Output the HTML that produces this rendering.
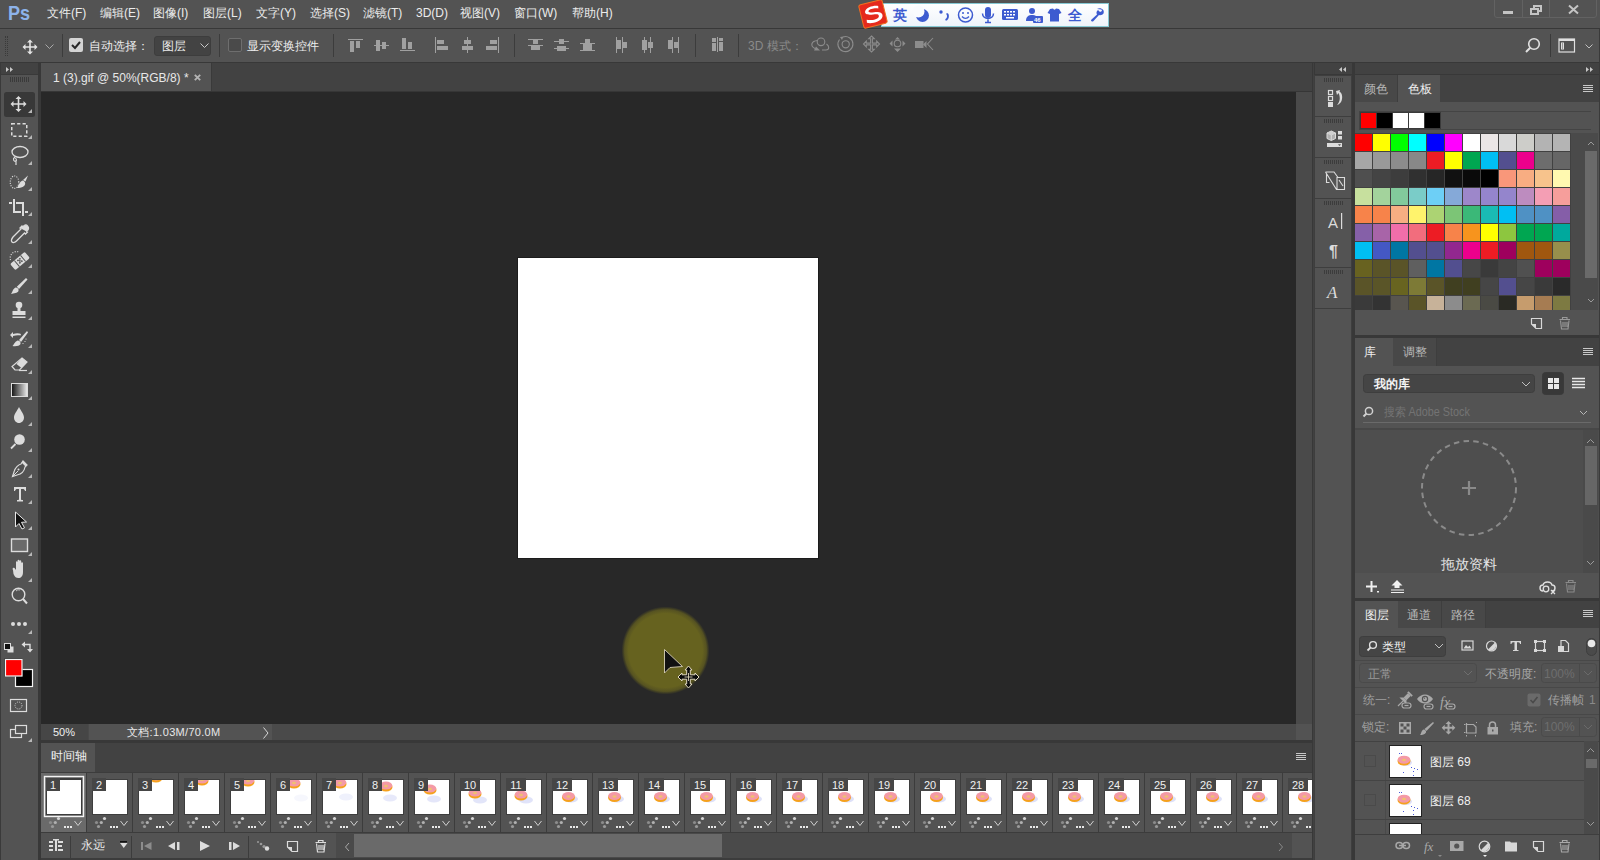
<!DOCTYPE html>
<html><head><meta charset="utf-8">
<style>
*{margin:0;padding:0;box-sizing:border-box}
html,body{width:1600px;height:860px;overflow:hidden;background:#535353;font-family:"Liberation Sans",sans-serif;font-size:12px;color:#ececec}
.a{position:absolute}
.t{position:absolute;white-space:nowrap;line-height:1}
svg{position:absolute;overflow:visible}
</style></head><body>
<!-- menu bar -->
<div class="a" style="left:0;top:0;width:1600px;height:28px;background:#535353"></div>
<div class="a" style="left:0;top:28px;width:1600px;height:1px;background:#383838"></div>
<!-- options bar -->
<div class="a" style="left:0;top:29px;width:1600px;height:33px;background:#535353"></div>
<div class="a" style="left:0;top:62px;width:1600px;height:1px;background:#383838"></div>
<!-- left toolbar -->
<div class="a" style="left:0;top:63px;width:38px;height:797px;background:#535353"></div>
<div class="a" style="left:0;top:63px;width:38px;height:11px;background:#424242"></div><div class="a" style="left:0;top:74px;width:38px;height:1px;background:#3a3a3a"></div><div class="a" style="left:0;top:63px;width:1px;height:797px;background:#3a3a3a"></div>
<div class="a" style="left:38px;top:63px;width:3px;height:797px;background:#383838"></div>
<!-- doc tab bar -->
<div class="a" style="left:41px;top:63px;width:1271px;height:29px;background:#424242"></div>
<div class="a" style="left:41px;top:63px;width:170px;height:28px;background:#535353"></div><div class="a" style="left:211px;top:63px;width:1px;height:28px;background:#3a3a3a"></div><div class="a" style="left:41px;top:91px;width:1271px;height:1px;background:#363636"></div>
<!-- canvas -->
<div class="a" style="left:41px;top:92px;width:1255px;height:632px;background:#282828"></div>
<div class="a" style="left:1296px;top:92px;width:16px;height:632px;background:#4a4a4a"></div>
<div class="a" style="left:517px;top:257px;width:302px;height:302px;background:#1c1c1c"></div>
<div class="a" style="left:518px;top:258px;width:300px;height:300px;background:#ffffff"></div>
<!-- status bar -->
<div class="a" style="left:41px;top:724px;width:1271px;height:16px;background:#4a4a4a"></div>
<div class="a" style="left:41px;top:724px;width:47px;height:16px;background:#464646"></div>
<div class="a" style="left:89px;top:724px;width:183px;height:16px;background:#535353"></div>
<div class="a" style="left:1296px;top:724px;width:16px;height:16px;background:#535353"></div>
<div class="a" style="left:41px;top:740px;width:1271px;height:3px;background:#383838"></div>
<!-- timeline -->
<div class="a" style="left:41px;top:743px;width:1271px;height:29px;background:#424242"></div>
<div class="a" style="left:41px;top:743px;width:54px;height:29px;background:#535353"></div>
<div class="a" style="left:41px;top:772px;width:1271px;height:61px;background:#3c3c3c"></div>
<div class="a" style="left:41px;top:833px;width:1271px;height:27px;background:#4a4a4a"></div>
<div class="a" style="left:41px;top:833px;width:295px;height:27px;background:#535353"></div>
<div class="a" style="left:1292px;top:833px;width:20px;height:27px;background:#535353"></div>
<div class="a" style="left:354px;top:834px;width:368px;height:23px;background:#6a6a6a"></div>
<div class="a" style="left:41px;top:858px;width:1271px;height:2px;background:#3c3c3c"></div>
<!-- gutter -->
<div class="a" style="left:1312px;top:63px;width:3px;height:797px;background:#383838"></div><div class="a" style="left:1313px;top:63px;width:1px;height:797px;background:#414141"></div>
<!-- icon strip -->
<div class="a" style="left:1315px;top:63px;width:37px;height:797px;background:#535353"></div>
<div class="a" style="left:1315px;top:63px;width:37px;height:11px;background:#424242"></div>
<div class="a" style="left:1352px;top:63px;width:3px;height:797px;background:#383838"></div>
<!-- right panels -->
<div class="a" style="left:1315px;top:74px;width:285px;height:1px;background:#383838"></div>
<div class="a" style="left:1355px;top:63px;width:245px;height:11px;background:#424242"></div>
<div class="a" style="left:1599px;top:29px;width:1px;height:831px;background:#3a3a3a;z-index:5"></div>
<!-- MENU -->
<div class="t" style="left:8px;top:2px;font-size:21px;font-weight:bold;color:#8db3ea;transform:scaleX(0.86);transform-origin:0 0">Ps</div>
<div class="t" style="left:47px;top:7px">文件(F)</div>
<div class="t" style="left:100px;top:7px">编辑(E)</div>
<div class="t" style="left:153px;top:7px">图像(I)</div>
<div class="t" style="left:203px;top:7px">图层(L)</div>
<div class="t" style="left:256px;top:7px">文字(Y)</div>
<div class="t" style="left:310px;top:7px">选择(S)</div>
<div class="t" style="left:363px;top:7px">滤镜(T)</div>
<div class="t" style="left:416px;top:7px">3D(D)</div>
<div class="t" style="left:460px;top:7px">视图(V)</div>
<div class="t" style="left:514px;top:7px">窗口(W)</div>
<div class="t" style="left:572px;top:7px">帮助(H)</div>
<!-- OPTIONS -->
<div class="a" style="left:5px;top:36px;width:1px;height:20px;border-left:1px dotted #3a3a3a"></div>
<div class="a" style="left:7px;top:36px;width:1px;height:20px;border-left:1px dotted #3a3a3a"></div>
<svg style="left:22px;top:39px" width="16" height="16" viewBox="0 0 16 16"><path d="M8 0.5 L11 3.5 H8.8 V7.2 H12.5 V5 L15.5 8 L12.5 11 V8.8 H8.8 V12.5 H11 L8 15.5 L5 12.5 H7.2 V8.8 H3.5 V11 L0.5 8 L3.5 5 V7.2 H7.2 V3.5 H5 Z" fill="#e4e4e4"/></svg>
<svg style="left:45px;top:44px" width="9" height="6" viewBox="0 0 9 6"><path d="M0.5 0.5 L4.5 4.5 L8.5 0.5" stroke="#a8a8a8" fill="none" stroke-width="1"/></svg>
<div class="a" style="left:62px;top:34px;width:1px;height:23px;background:#3c3c3c"></div>
<div class="a" style="left:69px;top:38px;width:14px;height:14px;background:#d4d4d4;border-radius:2px"></div>
<svg style="left:69px;top:38px" width="14" height="14" viewBox="0 0 14 14"><path d="M3 7 L6 10 L11 4" stroke="#282828" stroke-width="2" fill="none"/></svg>
<div class="t" style="left:89px;top:40px">自动选择：</div>
<div class="a" style="left:154px;top:36px;width:57px;height:20px;background:#434343;border:1px solid #3d3d3d;border-radius:3px"></div>
<div class="t" style="left:162px;top:40px">图层</div>
<svg style="left:200px;top:43px" width="9" height="6" viewBox="0 0 9 6"><path d="M0.5 0.5 L4.5 4.5 L8.5 0.5" stroke="#c8c8c8" fill="none" stroke-width="1"/></svg>
<div class="a" style="left:219px;top:34px;width:1px;height:23px;background:#3c3c3c"></div>
<div class="a" style="left:228px;top:38px;width:14px;height:14px;background:#4a4a4a;border:1px solid #6e6e6e;border-radius:2px"></div>
<div class="t" style="left:247px;top:40px">显示变换控件</div>
<div class="a" style="left:333px;top:34px;width:1px;height:23px;background:#3c3c3c"></div>
<svg style="left:0;top:0" width="1600" height="62">
<g fill="#a0a0a0">
<rect x="348" y="39" width="15" height="1"/><rect x="350" y="41" width="4" height="11"/><rect x="356" y="41" width="4" height="7"/>
<rect x="374" y="45" width="15" height="1"/><rect x="376" y="40" width="4" height="11"/><rect x="382" y="42" width="4" height="7"/>
<rect x="400" y="50" width="15" height="1"/><rect x="402" y="38" width="4" height="11"/><rect x="408" y="42" width="4" height="7"/>
<rect x="435" y="37" width="1" height="16"/><rect x="437" y="40" width="7" height="4"/><rect x="437" y="46" width="11" height="4"/>
<rect x="467" y="37" width="1" height="16"/><rect x="464" y="40" width="7" height="4"/><rect x="462" y="46" width="11" height="4"/>
<rect x="498" y="37" width="1" height="16"/><rect x="490" y="40" width="7" height="4"/><rect x="486" y="46" width="11" height="4"/>
<rect x="528" y="39" width="15" height="1"/><rect x="533" y="40" width="5" height="4"/><rect x="528" y="45" width="15" height="1"/><rect x="531" y="46" width="9" height="4"/>
<rect x="554" y="41" width="15" height="1"/><rect x="559" y="39" width="5" height="5"/><rect x="554" y="48" width="15" height="1"/><rect x="557" y="46" width="9" height="5"/>
<rect x="585" y="39" width="5" height="4"/><rect x="580" y="43" width="15" height="1"/><rect x="583" y="44" width="9" height="6"/><rect x="580" y="50" width="15" height="1"/>
<rect x="616" y="37" width="1" height="16"/><rect x="617" y="40" width="4" height="9"/><rect x="622" y="37" width="1" height="16"/><rect x="623" y="42" width="4" height="6"/>
<rect x="644" y="37" width="1" height="16"/><rect x="642" y="40" width="5" height="10"/><rect x="650" y="37" width="1" height="16"/><rect x="648" y="42" width="5" height="6"/>
<rect x="668" y="40" width="4" height="9"/><rect x="672" y="37" width="1" height="16"/><rect x="674" y="42" width="4" height="6"/><rect x="678" y="37" width="1" height="16"/>
<rect x="712" y="38" width="4" height="4"/><rect x="712" y="43" width="4" height="8"/><rect x="717" y="37" width="1" height="15"/><rect x="719" y="38" width="4" height="3"/><rect x="719" y="42" width="4" height="9"/>
</g>
<rect x="514" y="34" width="1" height="23" fill="#3c3c3c"/>
<rect x="695" y="34" width="1" height="23" fill="#3c3c3c"/>
<rect x="738" y="34" width="1" height="23" fill="#3c3c3c"/>
<g stroke="#8c8c8c" fill="none" stroke-width="1.1">
<circle cx="821" cy="41.8" r="3.8"/><path d="M817.5 40.5 C811 41 810 46 815 48.5 M822 50 H826 C829.5 50 829.5 46 826.5 44"/>
<path d="M839.5 39.5 A7.5 7.5 0 1 0 843 37" /><circle cx="845.7" cy="44.3" r="3.6"/>
<path d="M871.5 36 L874.3 38.8 H872.4 V43.1 H876.7 V41.2 L879.5 44 L876.7 46.8 V44.9 H872.4 V49.2 H874.3 L871.5 52 L868.7 49.2 H870.6 V44.9 H866.3 V46.8 L863.5 44 L866.3 41.2 V43.1 H870.6 V38.8 H868.7 Z"/>
<circle cx="897.5" cy="43.5" r="3.3"/>
<path d="M933 38 L927.5 44 L933 50"/>
</g>
<g fill="#8c8c8c">
<path d="M814 50.5 L820 50.5 L816 46.5 Z"/>
<path d="M840 37 L843.5 36.5 L842 40 Z"/>
<path d="M897.5 37 L900 39.5 H895 Z M897.5 52 L901 48.5 H894 Z M889.5 43.5 L892.5 40.5 V46.5 Z M905.5 43.5 L902.5 40.5 V46.5 Z"/>
<rect x="915" y="41" width="8.5" height="7"/><path d="M923 44.5 L926.5 41 V48 Z"/>
</g>
</svg>
<div class="t" style="left:748px;top:40px;color:#8a8a8a">3D 模式：</div>
<svg style="left:1524px;top:37px" width="18" height="17" viewBox="0 0 18 17"><circle cx="10" cy="7" r="5.3" stroke="#e0e0e0" stroke-width="1.6" fill="none"/><path d="M6.2 10.8 L2 15" stroke="#e0e0e0" stroke-width="2"/></svg>
<div class="a" style="left:1550px;top:34px;width:1px;height:23px;background:#3a3a3a"></div>
<svg style="left:1558px;top:38px" width="18" height="16" viewBox="0 0 18 16"><rect x="1" y="1" width="15.5" height="13" fill="none" stroke="#e0e0e0" stroke-width="1.2"/><rect x="1" y="1" width="15.5" height="2" fill="#e0e0e0"/><rect x="3" y="4.5" width="3" height="7" fill="#e0e0e0"/><g fill="#535353"><rect x="4" y="5.5" width="1" height="1"/><rect x="4" y="7.5" width="1" height="1"/><rect x="4" y="9.5" width="1" height="1"/></g></svg>
<svg style="left:1585px;top:44px" width="9" height="6" viewBox="0 0 9 6"><path d="M0.5 0.5 L4 4 L7.5 0.5" stroke="#c0c0c0" fill="none"/></svg>
<!-- window ctrls -->
<div class="a" style="left:1494px;top:-3px;width:103px;height:21px;border:1px solid #626262;border-radius:3px"></div>
<div class="a" style="left:1522px;top:0;width:1px;height:18px;background:#626262"></div>
<div class="a" style="left:1549px;top:0;width:1px;height:18px;background:#626262"></div>
<div class="a" style="left:1503px;top:11px;width:10px;height:3px;background:#c4c4c4"></div>
<div class="a" style="left:1533px;top:5px;width:9px;height:7px;border:2px solid #c4c4c4"></div>
<div class="a" style="left:1530px;top:8px;width:9px;height:7px;border:2px solid #c4c4c4;background:#535353"></div>
<svg style="left:1568px;top:5px" width="11" height="9" viewBox="0 0 11 9"><path d="M1 0.5 L10 8.5 M10 0.5 L1 8.5" stroke="#c4c4c4" stroke-width="2"/></svg>
<!-- TOOLBAR -->
<svg style="left:0;top:0" width="40" height="860">
<path d="M6 67 L9 69.5 L6 72 Z M10 67 L13 69.5 L10 72 Z" fill="#c8c8c8"/>
<g fill="#3a3a3a"><rect x="10" y="77" width="1" height="5"/><rect x="12" y="77" width="1" height="5"/><rect x="14" y="77" width="1" height="5"/><rect x="16" y="77" width="1" height="5"/><rect x="18" y="77" width="1" height="5"/><rect x="20" y="77" width="1" height="5"/><rect x="22" y="77" width="1" height="5"/><rect x="24" y="77" width="1" height="5"/><rect x="26" y="77" width="1" height="5"/><rect x="28" y="77" width="1" height="5"/></g>
<rect x="4" y="92" width="31" height="25" rx="2.5" fill="#383838"/>
<path d="M18.5 96 L21.5 99 H19.3 V103.2 H23.5 V101 L26.5 104 L23.5 107 V104.8 H19.3 V109 H21.5 L18.5 112 L15.5 109 H17.7 V104.8 H13.5 V107 L10.5 104 L13.5 101 V103.2 H17.7 V99 H15.5 Z" fill="#dcdcdc"/>
<path d="M32 109 V113 H28 Z" fill="#b8b8b8"/>
<rect x="11.75" y="123.75" width="15" height="12.5" fill="none" stroke="#dcdcdc" stroke-width="1.5" stroke-dasharray="3.2 2.2"/>
<path d="M32 135 V139 H28 Z" fill="#b8b8b8"/>
<ellipse cx="20" cy="152" rx="8" ry="5.5" fill="none" stroke="#dcdcdc" stroke-width="1.3"/>
<path d="M15 157 C12 159 14 162 16 161 C17 160 16 158 15 158 M16 161 V165" fill="none" stroke="#dcdcdc" stroke-width="1.2"/>
<path d="M32 161 V165 H28 Z" fill="#b8b8b8"/>
<ellipse cx="14.5" cy="182.2" rx="4.3" ry="6.2" fill="none" stroke="#dcdcdc" stroke-width="1.1" stroke-dasharray="1.1 1.3"/>
<path d="M28 175.5 L25.5 181.5 L23 180 Z" fill="#dcdcdc"/><path d="M22.5 180.5 C25 181 26 183.5 24.5 185.5 C23 187.5 19.5 188 17 188 C18.5 186.5 19 182 22.5 180.5 Z" fill="#dcdcdc"/>
<path d="M32 187 V191 H28 Z" fill="#b8b8b8"/>
<g fill="#dcdcdc"><rect x="13" y="199" width="2" height="14"/><rect x="13" y="211" width="8" height="2"/><rect x="9" y="202" width="3" height="2"/><rect x="16" y="202" width="8" height="2"/><rect x="22" y="202" width="2" height="14"/><rect x="25" y="211" width="3" height="2"/></g>
<path d="M32 212 V216 H28 Z" fill="#b8b8b8"/>
<path d="M27.5 226 C26 224 24 225 23 227 L22 226 L20 228 L21 229 L13 237 C11.5 239 11 241 12 242 C13 243 15 242.5 16.5 241 L24.5 233 L25.5 234 L27.5 232 L26.5 231 C28.5 230 29.5 228 27.5 226 Z" fill="none" stroke="#dcdcdc" stroke-width="1.3"/>
<path d="M27.5 226 C26 224 24 225 23 227 L22 226 L20 228 L27.5 232 L26.5 231 C28.5 230 29.5 228 27.5 226 Z" fill="#dcdcdc"/>
<path d="M32 240 V244 H28 Z" fill="#b8b8b8"/>
<path d="M10.5 260 A6.5 6.5 0 0 1 19 252" fill="none" stroke="#dcdcdc" stroke-width="1.2" stroke-dasharray="1 1.5"/>
<g transform="rotate(-40 20 261)"><rect x="10.5" y="257" width="19" height="8" rx="1.5" fill="#dcdcdc"/><rect x="15.5" y="257" width="1" height="8" fill="#535353"/><rect x="23.5" y="257" width="1" height="8" fill="#535353"/>
<g fill="#535353"><rect x="18" y="258.5" width="1.6" height="1.6"/><rect x="20.5" y="258.5" width="1.6" height="1.6"/><rect x="18" y="261.5" width="1.6" height="1.6"/><rect x="20.5" y="261.5" width="1.6" height="1.6"/><rect x="19.2" y="260" width="1.6" height="1.6"/></g></g>
<path d="M32 264 V268 H28 Z" fill="#b8b8b8"/>
<path d="M26 278 L27.5 279.5 L19 289 L16.8 286.8 Z" fill="#dcdcdc"/><path d="M15.5 287.5 C17.5 287.5 19 289 18.5 291 C17.5 293 14 293.5 11 294 C12.5 292.5 12.5 289 15.5 287.5 Z" fill="#dcdcdc"/>
<path d="M32 290 V294 H28 Z" fill="#b8b8b8"/>
<circle cx="19" cy="305" r="3.3" fill="#dcdcdc"/><rect x="17.5" y="307" width="3" height="5" fill="#dcdcdc"/><rect x="12.5" y="311" width="13" height="4" fill="#dcdcdc"/><rect x="12.5" y="316.5" width="13" height="1.5" fill="#dcdcdc"/>
<path d="M32 316 V320 H28 Z" fill="#b8b8b8"/>
<path d="M10 335 L13 332 V334 C16 333 19 333 21 334 L20.5 335.5 C18.5 335 16 335 13 336 V338 Z" fill="#dcdcdc"/>
<path d="M27 331 L28 332.5 L21 342 L19 340 Z" fill="#dcdcdc"/><path d="M17.5 340.5 C19.5 340.5 21 342 20.5 344 C19.5 346 16 346.5 12.5 346 C14 344.5 14.5 342 17.5 340.5 Z" fill="#dcdcdc"/>
<g fill="#dcdcdc"><circle cx="26" cy="339" r=".6"/><circle cx="25" cy="341.5" r=".6"/><circle cx="23" cy="343.5" r=".6"/></g>
<path d="M32 344 V348 H28 Z" fill="#b8b8b8"/>
<path d="M22 358 L27 362 L19.5 370 L15 370 L12 366.5 Z" fill="none" stroke="#dcdcdc" stroke-width="1.2"/><path d="M22 358 L27 362 L21.5 368 L16.5 364 Z" fill="#dcdcdc"/><path d="M19 370.5 H27" stroke="#dcdcdc" stroke-width="1.2"/>
<path d="M32 370 V374 H28 Z" fill="#b8b8b8"/>
<defs><linearGradient id="gr" x1="0" x2="1"><stop offset="0" stop-color="#111"/><stop offset="1" stop-color="#eee"/></linearGradient></defs>
<rect x="11.5" y="383.5" width="16" height="13" fill="url(#gr)" stroke="#dcdcdc" stroke-width="1"/>
<path d="M32 396 V400 H28 Z" fill="#b8b8b8"/>
<path d="M19 407 C21 411 24 414 24 417.5 C24 420.5 21.8 423 19 423 C16.2 423 14 420.5 14 417.5 C14 414 17 411 19 407 Z" fill="#dcdcdc"/>
<path d="M32 422 V426 H28 Z" fill="#b8b8b8"/>
<circle cx="19.5" cy="439.5" r="5.3" fill="#dcdcdc"/><path d="M15.5 444 L11 448.5" stroke="#dcdcdc" stroke-width="1.8"/>
<path d="M32 448 V452 H28 Z" fill="#b8b8b8"/>
<path d="M23 461 L27 465 L25 467 C24.5 470 22 474 17 475 L12.5 476.5 L14 472 C15 467 19 464.5 21 464 Z" fill="none" stroke="#dcdcdc" stroke-width="1.2"/><path d="M23 461 L27 465 L25.5 466.5 L21.5 462.5 Z" fill="#dcdcdc"/><circle cx="18.5" cy="469.5" r="1" fill="#dcdcdc"/><path d="M13 476 L18 471" stroke="#dcdcdc" stroke-width="1"/>
<path d="M32 474 V478 H28 Z" fill="#b8b8b8"/>
<path d="M14 487 H26 V491 H25 C24.5 489.5 24 489 22.5 489 H21 V499 C21 500 21.5 500 23 500 V501.5 H17 V500 C18.5 500 19 500 19 499 V489 H17.5 C16 489 15.5 489.5 15 491 H14 Z" fill="#dcdcdc"/>
<path d="M32 500 V504 H28 Z" fill="#b8b8b8"/>
<path d="M15.5 512 V527 L19 523.5 L22 529 L24.5 527.8 L21.5 522.3 L26.5 522 Z" fill="#111" stroke="#e6e6e6" stroke-width="1"/>
<path d="M32 526 V530 H28 Z" fill="#b8b8b8"/>
<rect x="11.5" y="539" width="16" height="12.5" fill="#6a6a6a" stroke="#dcdcdc" stroke-width="1.4"/>
<path d="M32 552 V556 H28 Z" fill="#b8b8b8"/>
<path d="M13 570 C12 568.5 13 567 14.5 568 L16 570 V562 C16 561 17.6 561 17.6 562 V568 V560.5 C17.6 559.5 19.4 559.5 19.4 560.5 V568 V561 C19.4 560 21.2 560 21.2 561 V568 V563 C21.2 562 23 562 23 563 V572 C23 576 21 578 18.5 578 C16 578 15 577 13.5 574 Z" fill="#dcdcdc"/>
<path d="M32 578 V582 H28 Z" fill="#b8b8b8"/>
<circle cx="18.5" cy="594.5" r="6.3" fill="none" stroke="#dcdcdc" stroke-width="1.4"/><path d="M23 599 L27 603.5" stroke="#dcdcdc" stroke-width="2"/>
<path d="M16 591 A3.5 3.5 0 0 1 20 590" stroke="#dcdcdc" stroke-width="0.8" fill="none"/>
<g fill="#dcdcdc"><circle cx="13" cy="624" r="2"/><circle cx="19" cy="624" r="2"/><circle cx="25" cy="624" r="2"/></g>
<path d="M32 630 V634 H28 Z" fill="#b8b8b8"/>
<rect x="7.5" y="646.5" width="6" height="6" fill="#dcdcdc"/><rect x="4.5" y="643.5" width="6" height="6" fill="#111" stroke="#dcdcdc" stroke-width="1"/>
<path d="M24 644.5 H30 V649.5" fill="none" stroke="#dcdcdc" stroke-width="1.4"/><path d="M21.5 644.5 L25 641.5 V647.5 Z M30 652.5 L27 649 H33 Z" fill="#dcdcdc"/>
<rect x="15.5" y="669.5" width="17" height="17" fill="#000" stroke="#f4f4f4" stroke-width="1.2"/>

<rect x="4.5" y="658.5" width="18" height="18" fill="#1e1e1e"/><rect x="5.5" y="659.5" width="16.5" height="16.5" fill="#ff0000" stroke="#f4f4f4" stroke-width="1.2"/>
<rect x="10.5" y="699.5" width="16" height="12" fill="none" stroke="#dcdcdc" stroke-width="1.2"/><circle cx="18.5" cy="705.5" r="3.5" fill="none" stroke="#dcdcdc" stroke-width="1" stroke-dasharray="0.9 1.2"/>
<rect x="10.5" y="729.5" width="11" height="8" fill="none" stroke="#dcdcdc" stroke-width="1.2"/><rect x="15.5" y="725.5" width="11" height="8" fill="#535353" stroke="#dcdcdc" stroke-width="1.2"/>
<path d="M32 738 V742 H28 Z" fill="#b8b8b8"/>
</svg>
<!-- DOC TAB -->
<div class="t" id="doctab" style="left:53px;top:72px;font-size:12px;color:#e8e8e8">1 (3).gif @ 50%(RGB/8) *</div>
<svg style="left:194px;top:74px" width="7" height="7" viewBox="0 0 7 7"><path d="M0.8 0.8 L6.2 6.2 M6.2 0.8 L0.8 6.2" stroke="#b4b4b4" stroke-width="1.8"/></svg>
<!-- STATUS TEXT -->
<div class="t" style="left:53px;top:727px;font-size:11px;color:#f0f0f0">50%</div>
<div class="t" style="left:127px;top:727px;font-size:11px;color:#e8e8e8;letter-spacing:0.3px">文档:1.03M/70.0M</div>
<svg style="left:263px;top:727px" width="6" height="12" viewBox="0 0 6 12"><path d="M0.5 0.5 L5 6 L0.5 11.5" fill="none" stroke="#d8d8d8" stroke-width="1"/></svg>
<!-- TIMELINE TAB -->
<div class="t" style="left:51px;top:750px;color:#f0f0f0">时间轴</div>
<svg style="left:1296px;top:752px" width="10" height="9" viewBox="0 0 10 9"><path d="M0 1.5 H10 M0 3.5 H10 M0 5.5 H10 M0 7.5 H10" stroke="#c8c8c8" stroke-width="1"/></svg>
<svg style="left:0;top:0" width="1312" height="860"><defs><clipPath id="tlc"><rect x="41" y="772" width="1271" height="61"/></clipPath><clipPath id="th1"><rect x="47" y="780" width="34" height="34"/></clipPath><clipPath id="th2"><rect x="93" y="780" width="34" height="34"/></clipPath><clipPath id="th3"><rect x="139" y="780" width="34" height="34"/></clipPath><clipPath id="th4"><rect x="185" y="780" width="34" height="34"/></clipPath><clipPath id="th5"><rect x="231" y="780" width="34" height="34"/></clipPath><clipPath id="th6"><rect x="277" y="780" width="34" height="34"/></clipPath><clipPath id="th7"><rect x="323" y="780" width="34" height="34"/></clipPath><clipPath id="th8"><rect x="369" y="780" width="34" height="34"/></clipPath><clipPath id="th9"><rect x="415" y="780" width="34" height="34"/></clipPath><clipPath id="th10"><rect x="461" y="780" width="34" height="34"/></clipPath><clipPath id="th11"><rect x="507" y="780" width="34" height="34"/></clipPath><clipPath id="th12"><rect x="553" y="780" width="34" height="34"/></clipPath><clipPath id="th13"><rect x="599" y="780" width="34" height="34"/></clipPath><clipPath id="th14"><rect x="645" y="780" width="34" height="34"/></clipPath><clipPath id="th15"><rect x="691" y="780" width="34" height="34"/></clipPath><clipPath id="th16"><rect x="737" y="780" width="34" height="34"/></clipPath><clipPath id="th17"><rect x="783" y="780" width="34" height="34"/></clipPath><clipPath id="th18"><rect x="829" y="780" width="34" height="34"/></clipPath><clipPath id="th19"><rect x="875" y="780" width="34" height="34"/></clipPath><clipPath id="th20"><rect x="921" y="780" width="34" height="34"/></clipPath><clipPath id="th21"><rect x="967" y="780" width="34" height="34"/></clipPath><clipPath id="th22"><rect x="1013" y="780" width="34" height="34"/></clipPath><clipPath id="th23"><rect x="1059" y="780" width="34" height="34"/></clipPath><clipPath id="th24"><rect x="1105" y="780" width="34" height="34"/></clipPath><clipPath id="th25"><rect x="1151" y="780" width="34" height="34"/></clipPath><clipPath id="th26"><rect x="1197" y="780" width="34" height="34"/></clipPath><clipPath id="th27"><rect x="1243" y="780" width="34" height="34"/></clipPath><clipPath id="th28"><rect x="1289" y="780" width="34" height="34"/></clipPath></defs><g clip-path="url(#tlc)"><rect x="41" y="773" width="45" height="59" fill="#6a6a6a"/><rect x="44.5" y="776.5" width="39" height="40" fill="none" stroke="#f4f4f4" stroke-width="1.4"/><rect x="46" y="778" width="36" height="37" fill="#3c3c3c"/><rect x="47" y="780" width="34" height="34" fill="#ffffff"/><rect x="46" y="778" width="14" height="13" fill="#464646"/><text x="53.0" y="789" font-size="11" fill="#f0f0f0" text-anchor="middle" font-family="Liberation Sans, sans-serif">1</text><circle cx="58.5" cy="818.5" r="1.6" fill="#d6d6d6"/><circle cx="50.5" cy="822.5" r="1.6" fill="#8c8c8c"/><circle cx="55.3" cy="822.5" r="1.6" fill="#b0b0b0"/><circle cx="52.5" cy="826.5" r="1.6" fill="#9a9a9a"/><rect x="64" y="826" width="2" height="2" fill="#e8e8e8"/><rect x="67" y="826" width="2" height="2" fill="#e8e8e8"/><rect x="70" y="826" width="2" height="2" fill="#e8e8e8"/><path d="M74.5 821 L78 825.5 L81.5 821" fill="none" stroke="#d0d0d0" stroke-width="1"/><rect x="87" y="773" width="45" height="59" fill="#535353"/><rect x="92" y="779" width="36" height="36" fill="#3e3e3e"/><rect x="93" y="780" width="34" height="34" fill="#ffffff"/><g clip-path="url(#th2)"><ellipse cx="101" cy="777" rx="6.5" ry="4.5" fill="#f5a11c"/><ellipse cx="101" cy="775.5" rx="6.3" ry="4" fill="#f49aa6"/><ellipse cx="101" cy="776" rx="2" ry="1.2" fill="#f0c070"/></g><rect x="92" y="778" width="14" height="13" fill="#464646"/><text x="99.0" y="789" font-size="11" fill="#f0f0f0" text-anchor="middle" font-family="Liberation Sans, sans-serif">2</text><circle cx="104.5" cy="818.5" r="1.6" fill="#d6d6d6"/><circle cx="96.5" cy="822.5" r="1.6" fill="#8c8c8c"/><circle cx="101.3" cy="822.5" r="1.6" fill="#b0b0b0"/><circle cx="98.5" cy="826.5" r="1.6" fill="#9a9a9a"/><rect x="110" y="826" width="2" height="2" fill="#e8e8e8"/><rect x="113" y="826" width="2" height="2" fill="#e8e8e8"/><rect x="116" y="826" width="2" height="2" fill="#e8e8e8"/><path d="M120.5 821 L124 825.5 L127.5 821" fill="none" stroke="#d0d0d0" stroke-width="1"/><rect x="133" y="773" width="45" height="59" fill="#535353"/><rect x="138" y="779" width="36" height="36" fill="#3e3e3e"/><rect x="139" y="780" width="34" height="34" fill="#ffffff"/><g clip-path="url(#th3)"><ellipse cx="156" cy="778" rx="6.5" ry="4.5" fill="#f5a11c"/><ellipse cx="156" cy="776.5" rx="6.3" ry="4" fill="#f49aa6"/><ellipse cx="156" cy="777" rx="2" ry="1.2" fill="#f0c070"/></g><rect x="138" y="778" width="14" height="13" fill="#464646"/><text x="145.0" y="789" font-size="11" fill="#f0f0f0" text-anchor="middle" font-family="Liberation Sans, sans-serif">3</text><circle cx="150.5" cy="818.5" r="1.6" fill="#d6d6d6"/><circle cx="142.5" cy="822.5" r="1.6" fill="#8c8c8c"/><circle cx="147.3" cy="822.5" r="1.6" fill="#b0b0b0"/><circle cx="144.5" cy="826.5" r="1.6" fill="#9a9a9a"/><rect x="156" y="826" width="2" height="2" fill="#e8e8e8"/><rect x="159" y="826" width="2" height="2" fill="#e8e8e8"/><rect x="162" y="826" width="2" height="2" fill="#e8e8e8"/><path d="M166.5 821 L170 825.5 L173.5 821" fill="none" stroke="#d0d0d0" stroke-width="1"/><rect x="179" y="773" width="45" height="59" fill="#535353"/><rect x="184" y="779" width="36" height="36" fill="#3e3e3e"/><rect x="185" y="780" width="34" height="34" fill="#ffffff"/><g clip-path="url(#th4)"><ellipse cx="202" cy="781" rx="6.5" ry="4.5" fill="#f5a11c"/><ellipse cx="202" cy="779.5" rx="6.3" ry="4" fill="#f49aa6"/><ellipse cx="202" cy="780" rx="2" ry="1.2" fill="#f0c070"/></g><rect x="184" y="778" width="14" height="13" fill="#464646"/><text x="191.0" y="789" font-size="11" fill="#f0f0f0" text-anchor="middle" font-family="Liberation Sans, sans-serif">4</text><circle cx="196.5" cy="818.5" r="1.6" fill="#d6d6d6"/><circle cx="188.5" cy="822.5" r="1.6" fill="#8c8c8c"/><circle cx="193.3" cy="822.5" r="1.6" fill="#b0b0b0"/><circle cx="190.5" cy="826.5" r="1.6" fill="#9a9a9a"/><rect x="202" y="826" width="2" height="2" fill="#e8e8e8"/><rect x="205" y="826" width="2" height="2" fill="#e8e8e8"/><rect x="208" y="826" width="2" height="2" fill="#e8e8e8"/><path d="M212.5 821 L216 825.5 L219.5 821" fill="none" stroke="#d0d0d0" stroke-width="1"/><rect x="225" y="773" width="45" height="59" fill="#535353"/><rect x="230" y="779" width="36" height="36" fill="#3e3e3e"/><rect x="231" y="780" width="34" height="34" fill="#ffffff"/><g clip-path="url(#th5)"><ellipse cx="248" cy="782" rx="6.5" ry="4.5" fill="#f5a11c"/><ellipse cx="248" cy="780.5" rx="6.3" ry="4" fill="#f49aa6"/><ellipse cx="248" cy="781" rx="2" ry="1.2" fill="#f0c070"/></g><rect x="230" y="778" width="14" height="13" fill="#464646"/><text x="237.0" y="789" font-size="11" fill="#f0f0f0" text-anchor="middle" font-family="Liberation Sans, sans-serif">5</text><circle cx="242.5" cy="818.5" r="1.6" fill="#d6d6d6"/><circle cx="234.5" cy="822.5" r="1.6" fill="#8c8c8c"/><circle cx="239.3" cy="822.5" r="1.6" fill="#b0b0b0"/><circle cx="236.5" cy="826.5" r="1.6" fill="#9a9a9a"/><rect x="248" y="826" width="2" height="2" fill="#e8e8e8"/><rect x="251" y="826" width="2" height="2" fill="#e8e8e8"/><rect x="254" y="826" width="2" height="2" fill="#e8e8e8"/><path d="M258.5 821 L262 825.5 L265.5 821" fill="none" stroke="#d0d0d0" stroke-width="1"/><rect x="271" y="773" width="45" height="59" fill="#535353"/><rect x="276" y="779" width="36" height="36" fill="#3e3e3e"/><rect x="277" y="780" width="34" height="34" fill="#ffffff"/><g clip-path="url(#th6)"><ellipse cx="301" cy="798" rx="7" ry="3.5" fill="#d4d8f6" opacity="0.20"/><ellipse cx="294" cy="784" rx="6.5" ry="4.5" fill="#f5a11c"/><ellipse cx="294" cy="782.5" rx="6.3" ry="4" fill="#f49aa6"/><ellipse cx="294" cy="783" rx="2" ry="1.2" fill="#f0c070"/></g><rect x="276" y="778" width="14" height="13" fill="#464646"/><text x="283.0" y="789" font-size="11" fill="#f0f0f0" text-anchor="middle" font-family="Liberation Sans, sans-serif">6</text><circle cx="288.5" cy="818.5" r="1.6" fill="#d6d6d6"/><circle cx="280.5" cy="822.5" r="1.6" fill="#8c8c8c"/><circle cx="285.3" cy="822.5" r="1.6" fill="#b0b0b0"/><circle cx="282.5" cy="826.5" r="1.6" fill="#9a9a9a"/><rect x="294" y="826" width="2" height="2" fill="#e8e8e8"/><rect x="297" y="826" width="2" height="2" fill="#e8e8e8"/><rect x="300" y="826" width="2" height="2" fill="#e8e8e8"/><path d="M304.5 821 L308 825.5 L311.5 821" fill="none" stroke="#d0d0d0" stroke-width="1"/><rect x="317" y="773" width="45" height="59" fill="#535353"/><rect x="322" y="779" width="36" height="36" fill="#3e3e3e"/><rect x="323" y="780" width="34" height="34" fill="#ffffff"/><g clip-path="url(#th7)"><ellipse cx="346" cy="797" rx="7" ry="3.5" fill="#d4d8f6" opacity="0.36"/><ellipse cx="340" cy="784" rx="6.5" ry="4.5" fill="#f5a11c"/><ellipse cx="340" cy="782.5" rx="6.3" ry="4" fill="#f49aa6"/><ellipse cx="340" cy="783" rx="2" ry="1.2" fill="#f0c070"/></g><rect x="322" y="778" width="14" height="13" fill="#464646"/><text x="329.0" y="789" font-size="11" fill="#f0f0f0" text-anchor="middle" font-family="Liberation Sans, sans-serif">7</text><circle cx="334.5" cy="818.5" r="1.6" fill="#d6d6d6"/><circle cx="326.5" cy="822.5" r="1.6" fill="#8c8c8c"/><circle cx="331.3" cy="822.5" r="1.6" fill="#b0b0b0"/><circle cx="328.5" cy="826.5" r="1.6" fill="#9a9a9a"/><rect x="340" y="826" width="2" height="2" fill="#e8e8e8"/><rect x="343" y="826" width="2" height="2" fill="#e8e8e8"/><rect x="346" y="826" width="2" height="2" fill="#e8e8e8"/><path d="M350.5 821 L354 825.5 L357.5 821" fill="none" stroke="#d0d0d0" stroke-width="1"/><rect x="363" y="773" width="45" height="59" fill="#535353"/><rect x="368" y="779" width="36" height="36" fill="#3e3e3e"/><rect x="369" y="780" width="34" height="34" fill="#ffffff"/><g clip-path="url(#th8)"><ellipse cx="390" cy="798" rx="7" ry="3.5" fill="#d4d8f6" opacity="0.56"/><ellipse cx="386" cy="787" rx="6.5" ry="4.5" fill="#f5a11c"/><ellipse cx="386" cy="785.5" rx="6.3" ry="4" fill="#f49aa6"/><ellipse cx="386" cy="786" rx="2" ry="1.2" fill="#f0c070"/></g><rect x="368" y="778" width="14" height="13" fill="#464646"/><text x="375.0" y="789" font-size="11" fill="#f0f0f0" text-anchor="middle" font-family="Liberation Sans, sans-serif">8</text><circle cx="380.5" cy="818.5" r="1.6" fill="#d6d6d6"/><circle cx="372.5" cy="822.5" r="1.6" fill="#8c8c8c"/><circle cx="377.3" cy="822.5" r="1.6" fill="#b0b0b0"/><circle cx="374.5" cy="826.5" r="1.6" fill="#9a9a9a"/><rect x="386" y="826" width="2" height="2" fill="#e8e8e8"/><rect x="389" y="826" width="2" height="2" fill="#e8e8e8"/><rect x="392" y="826" width="2" height="2" fill="#e8e8e8"/><path d="M396.5 821 L400 825.5 L403.5 821" fill="none" stroke="#d0d0d0" stroke-width="1"/><rect x="409" y="773" width="45" height="59" fill="#535353"/><rect x="414" y="779" width="36" height="36" fill="#3e3e3e"/><rect x="415" y="780" width="34" height="34" fill="#ffffff"/><g clip-path="url(#th9)"><ellipse cx="434" cy="799" rx="7" ry="3.5" fill="#d4d8f6" opacity="0.64"/><ellipse cx="430" cy="790" rx="6.5" ry="4.5" fill="#f5a11c"/><ellipse cx="430" cy="788.5" rx="6.3" ry="4" fill="#f49aa6"/><ellipse cx="430" cy="789" rx="2" ry="1.2" fill="#f0c070"/></g><rect x="414" y="778" width="14" height="13" fill="#464646"/><text x="421.0" y="789" font-size="11" fill="#f0f0f0" text-anchor="middle" font-family="Liberation Sans, sans-serif">9</text><circle cx="426.5" cy="818.5" r="1.6" fill="#d6d6d6"/><circle cx="418.5" cy="822.5" r="1.6" fill="#8c8c8c"/><circle cx="423.3" cy="822.5" r="1.6" fill="#b0b0b0"/><circle cx="420.5" cy="826.5" r="1.6" fill="#9a9a9a"/><rect x="432" y="826" width="2" height="2" fill="#e8e8e8"/><rect x="435" y="826" width="2" height="2" fill="#e8e8e8"/><rect x="438" y="826" width="2" height="2" fill="#e8e8e8"/><path d="M442.5 821 L446 825.5 L449.5 821" fill="none" stroke="#d0d0d0" stroke-width="1"/><rect x="455" y="773" width="45" height="59" fill="#535353"/><rect x="460" y="779" width="36" height="36" fill="#3e3e3e"/><rect x="461" y="780" width="34" height="34" fill="#ffffff"/><g clip-path="url(#th10)"><ellipse cx="480" cy="800" rx="7" ry="3.5" fill="#d4d8f6" opacity="0.68"/><ellipse cx="475" cy="794" rx="6.5" ry="4.5" fill="#f5a11c"/><ellipse cx="475" cy="792.5" rx="6.3" ry="4" fill="#f49aa6"/><ellipse cx="475" cy="793" rx="2" ry="1.2" fill="#f0c070"/></g><rect x="460" y="778" width="20" height="13" fill="#464646"/><text x="470.0" y="789" font-size="11" fill="#f0f0f0" text-anchor="middle" font-family="Liberation Sans, sans-serif">10</text><circle cx="472.5" cy="818.5" r="1.6" fill="#d6d6d6"/><circle cx="464.5" cy="822.5" r="1.6" fill="#8c8c8c"/><circle cx="469.3" cy="822.5" r="1.6" fill="#b0b0b0"/><circle cx="466.5" cy="826.5" r="1.6" fill="#9a9a9a"/><rect x="478" y="826" width="2" height="2" fill="#e8e8e8"/><rect x="481" y="826" width="2" height="2" fill="#e8e8e8"/><rect x="484" y="826" width="2" height="2" fill="#e8e8e8"/><path d="M488.5 821 L492 825.5 L495.5 821" fill="none" stroke="#d0d0d0" stroke-width="1"/><rect x="501" y="773" width="45" height="59" fill="#535353"/><rect x="506" y="779" width="36" height="36" fill="#3e3e3e"/><rect x="507" y="780" width="34" height="34" fill="#ffffff"/><g clip-path="url(#th11)"><ellipse cx="526" cy="800" rx="7" ry="3.5" fill="#d4d8f6" opacity="0.72"/><ellipse cx="521" cy="796" rx="6.5" ry="4.5" fill="#f5a11c"/><ellipse cx="521" cy="794.5" rx="6.3" ry="4" fill="#f49aa6"/><ellipse cx="521" cy="795" rx="2" ry="1.2" fill="#f0c070"/></g><rect x="506" y="778" width="20" height="13" fill="#464646"/><text x="516.0" y="789" font-size="11" fill="#f0f0f0" text-anchor="middle" font-family="Liberation Sans, sans-serif">11</text><circle cx="518.5" cy="818.5" r="1.6" fill="#d6d6d6"/><circle cx="510.5" cy="822.5" r="1.6" fill="#8c8c8c"/><circle cx="515.3" cy="822.5" r="1.6" fill="#b0b0b0"/><circle cx="512.5" cy="826.5" r="1.6" fill="#9a9a9a"/><rect x="524" y="826" width="2" height="2" fill="#e8e8e8"/><rect x="527" y="826" width="2" height="2" fill="#e8e8e8"/><rect x="530" y="826" width="2" height="2" fill="#e8e8e8"/><path d="M534.5 821 L538 825.5 L541.5 821" fill="none" stroke="#d0d0d0" stroke-width="1"/><rect x="547" y="773" width="45" height="59" fill="#535353"/><rect x="552" y="779" width="36" height="36" fill="#3e3e3e"/><rect x="553" y="780" width="34" height="34" fill="#ffffff"/><g clip-path="url(#th12)"><ellipse cx="571" cy="799" rx="7" ry="3.5" fill="#d4d8f6" opacity="0.80"/><ellipse cx="568.5" cy="797.5" rx="6.5" ry="4.5" fill="#f5a11c"/><ellipse cx="568.5" cy="796.0" rx="6.3" ry="4" fill="#f49aa6"/><ellipse cx="568.5" cy="796.5" rx="2" ry="1.2" fill="#f0c070"/></g><rect x="552" y="778" width="20" height="13" fill="#464646"/><text x="562.0" y="789" font-size="11" fill="#f0f0f0" text-anchor="middle" font-family="Liberation Sans, sans-serif">12</text><circle cx="564.5" cy="818.5" r="1.6" fill="#d6d6d6"/><circle cx="556.5" cy="822.5" r="1.6" fill="#8c8c8c"/><circle cx="561.3" cy="822.5" r="1.6" fill="#b0b0b0"/><circle cx="558.5" cy="826.5" r="1.6" fill="#9a9a9a"/><rect x="570" y="826" width="2" height="2" fill="#e8e8e8"/><rect x="573" y="826" width="2" height="2" fill="#e8e8e8"/><rect x="576" y="826" width="2" height="2" fill="#e8e8e8"/><path d="M580.5 821 L584 825.5 L587.5 821" fill="none" stroke="#d0d0d0" stroke-width="1"/><rect x="593" y="773" width="45" height="59" fill="#535353"/><rect x="598" y="779" width="36" height="36" fill="#3e3e3e"/><rect x="599" y="780" width="34" height="34" fill="#ffffff"/><g clip-path="url(#th13)"><ellipse cx="617" cy="799" rx="7" ry="3.5" fill="#d4d8f6" opacity="0.80"/><ellipse cx="614.5" cy="797.5" rx="6.5" ry="4.5" fill="#f5a11c"/><ellipse cx="614.5" cy="796.0" rx="6.3" ry="4" fill="#f49aa6"/><ellipse cx="614.5" cy="796.5" rx="2" ry="1.2" fill="#f0c070"/></g><rect x="598" y="778" width="20" height="13" fill="#464646"/><text x="608.0" y="789" font-size="11" fill="#f0f0f0" text-anchor="middle" font-family="Liberation Sans, sans-serif">13</text><circle cx="610.5" cy="818.5" r="1.6" fill="#d6d6d6"/><circle cx="602.5" cy="822.5" r="1.6" fill="#8c8c8c"/><circle cx="607.3" cy="822.5" r="1.6" fill="#b0b0b0"/><circle cx="604.5" cy="826.5" r="1.6" fill="#9a9a9a"/><rect x="616" y="826" width="2" height="2" fill="#e8e8e8"/><rect x="619" y="826" width="2" height="2" fill="#e8e8e8"/><rect x="622" y="826" width="2" height="2" fill="#e8e8e8"/><path d="M626.5 821 L630 825.5 L633.5 821" fill="none" stroke="#d0d0d0" stroke-width="1"/><rect x="639" y="773" width="45" height="59" fill="#535353"/><rect x="644" y="779" width="36" height="36" fill="#3e3e3e"/><rect x="645" y="780" width="34" height="34" fill="#ffffff"/><g clip-path="url(#th14)"><ellipse cx="663" cy="799" rx="7" ry="3.5" fill="#d4d8f6" opacity="0.80"/><ellipse cx="660.5" cy="797.5" rx="6.5" ry="4.5" fill="#f5a11c"/><ellipse cx="660.5" cy="796.0" rx="6.3" ry="4" fill="#f49aa6"/><ellipse cx="660.5" cy="796.5" rx="2" ry="1.2" fill="#f0c070"/></g><rect x="644" y="778" width="20" height="13" fill="#464646"/><text x="654.0" y="789" font-size="11" fill="#f0f0f0" text-anchor="middle" font-family="Liberation Sans, sans-serif">14</text><circle cx="656.5" cy="818.5" r="1.6" fill="#d6d6d6"/><circle cx="648.5" cy="822.5" r="1.6" fill="#8c8c8c"/><circle cx="653.3" cy="822.5" r="1.6" fill="#b0b0b0"/><circle cx="650.5" cy="826.5" r="1.6" fill="#9a9a9a"/><rect x="662" y="826" width="2" height="2" fill="#e8e8e8"/><rect x="665" y="826" width="2" height="2" fill="#e8e8e8"/><rect x="668" y="826" width="2" height="2" fill="#e8e8e8"/><path d="M672.5 821 L676 825.5 L679.5 821" fill="none" stroke="#d0d0d0" stroke-width="1"/><rect x="685" y="773" width="45" height="59" fill="#535353"/><rect x="690" y="779" width="36" height="36" fill="#3e3e3e"/><rect x="691" y="780" width="34" height="34" fill="#ffffff"/><g clip-path="url(#th15)"><ellipse cx="709" cy="799" rx="7" ry="3.5" fill="#d4d8f6" opacity="0.80"/><ellipse cx="706.5" cy="797.5" rx="6.5" ry="4.5" fill="#f5a11c"/><ellipse cx="706.5" cy="796.0" rx="6.3" ry="4" fill="#f49aa6"/><ellipse cx="706.5" cy="796.5" rx="2" ry="1.2" fill="#f0c070"/></g><rect x="690" y="778" width="20" height="13" fill="#464646"/><text x="700.0" y="789" font-size="11" fill="#f0f0f0" text-anchor="middle" font-family="Liberation Sans, sans-serif">15</text><circle cx="702.5" cy="818.5" r="1.6" fill="#d6d6d6"/><circle cx="694.5" cy="822.5" r="1.6" fill="#8c8c8c"/><circle cx="699.3" cy="822.5" r="1.6" fill="#b0b0b0"/><circle cx="696.5" cy="826.5" r="1.6" fill="#9a9a9a"/><rect x="708" y="826" width="2" height="2" fill="#e8e8e8"/><rect x="711" y="826" width="2" height="2" fill="#e8e8e8"/><rect x="714" y="826" width="2" height="2" fill="#e8e8e8"/><path d="M718.5 821 L722 825.5 L725.5 821" fill="none" stroke="#d0d0d0" stroke-width="1"/><rect x="731" y="773" width="45" height="59" fill="#535353"/><rect x="736" y="779" width="36" height="36" fill="#3e3e3e"/><rect x="737" y="780" width="34" height="34" fill="#ffffff"/><g clip-path="url(#th16)"><ellipse cx="755" cy="799" rx="7" ry="3.5" fill="#d4d8f6" opacity="0.80"/><ellipse cx="752.5" cy="797.5" rx="6.5" ry="4.5" fill="#f5a11c"/><ellipse cx="752.5" cy="796.0" rx="6.3" ry="4" fill="#f49aa6"/><ellipse cx="752.5" cy="796.5" rx="2" ry="1.2" fill="#f0c070"/></g><rect x="736" y="778" width="20" height="13" fill="#464646"/><text x="746.0" y="789" font-size="11" fill="#f0f0f0" text-anchor="middle" font-family="Liberation Sans, sans-serif">16</text><circle cx="748.5" cy="818.5" r="1.6" fill="#d6d6d6"/><circle cx="740.5" cy="822.5" r="1.6" fill="#8c8c8c"/><circle cx="745.3" cy="822.5" r="1.6" fill="#b0b0b0"/><circle cx="742.5" cy="826.5" r="1.6" fill="#9a9a9a"/><rect x="754" y="826" width="2" height="2" fill="#e8e8e8"/><rect x="757" y="826" width="2" height="2" fill="#e8e8e8"/><rect x="760" y="826" width="2" height="2" fill="#e8e8e8"/><path d="M764.5 821 L768 825.5 L771.5 821" fill="none" stroke="#d0d0d0" stroke-width="1"/><rect x="777" y="773" width="45" height="59" fill="#535353"/><rect x="782" y="779" width="36" height="36" fill="#3e3e3e"/><rect x="783" y="780" width="34" height="34" fill="#ffffff"/><g clip-path="url(#th17)"><ellipse cx="801" cy="799" rx="7" ry="3.5" fill="#d4d8f6" opacity="0.80"/><ellipse cx="798.5" cy="797.5" rx="6.5" ry="4.5" fill="#f5a11c"/><ellipse cx="798.5" cy="796.0" rx="6.3" ry="4" fill="#f49aa6"/><ellipse cx="798.5" cy="796.5" rx="2" ry="1.2" fill="#f0c070"/></g><rect x="782" y="778" width="20" height="13" fill="#464646"/><text x="792.0" y="789" font-size="11" fill="#f0f0f0" text-anchor="middle" font-family="Liberation Sans, sans-serif">17</text><circle cx="794.5" cy="818.5" r="1.6" fill="#d6d6d6"/><circle cx="786.5" cy="822.5" r="1.6" fill="#8c8c8c"/><circle cx="791.3" cy="822.5" r="1.6" fill="#b0b0b0"/><circle cx="788.5" cy="826.5" r="1.6" fill="#9a9a9a"/><rect x="800" y="826" width="2" height="2" fill="#e8e8e8"/><rect x="803" y="826" width="2" height="2" fill="#e8e8e8"/><rect x="806" y="826" width="2" height="2" fill="#e8e8e8"/><path d="M810.5 821 L814 825.5 L817.5 821" fill="none" stroke="#d0d0d0" stroke-width="1"/><rect x="823" y="773" width="45" height="59" fill="#535353"/><rect x="828" y="779" width="36" height="36" fill="#3e3e3e"/><rect x="829" y="780" width="34" height="34" fill="#ffffff"/><g clip-path="url(#th18)"><ellipse cx="847" cy="799" rx="7" ry="3.5" fill="#d4d8f6" opacity="0.80"/><ellipse cx="844.5" cy="797.5" rx="6.5" ry="4.5" fill="#f5a11c"/><ellipse cx="844.5" cy="796.0" rx="6.3" ry="4" fill="#f49aa6"/><ellipse cx="844.5" cy="796.5" rx="2" ry="1.2" fill="#f0c070"/></g><rect x="828" y="778" width="20" height="13" fill="#464646"/><text x="838.0" y="789" font-size="11" fill="#f0f0f0" text-anchor="middle" font-family="Liberation Sans, sans-serif">18</text><circle cx="840.5" cy="818.5" r="1.6" fill="#d6d6d6"/><circle cx="832.5" cy="822.5" r="1.6" fill="#8c8c8c"/><circle cx="837.3" cy="822.5" r="1.6" fill="#b0b0b0"/><circle cx="834.5" cy="826.5" r="1.6" fill="#9a9a9a"/><rect x="846" y="826" width="2" height="2" fill="#e8e8e8"/><rect x="849" y="826" width="2" height="2" fill="#e8e8e8"/><rect x="852" y="826" width="2" height="2" fill="#e8e8e8"/><path d="M856.5 821 L860 825.5 L863.5 821" fill="none" stroke="#d0d0d0" stroke-width="1"/><rect x="869" y="773" width="45" height="59" fill="#535353"/><rect x="874" y="779" width="36" height="36" fill="#3e3e3e"/><rect x="875" y="780" width="34" height="34" fill="#ffffff"/><g clip-path="url(#th19)"><ellipse cx="893" cy="799" rx="7" ry="3.5" fill="#d4d8f6" opacity="0.80"/><ellipse cx="890.5" cy="797.5" rx="6.5" ry="4.5" fill="#f5a11c"/><ellipse cx="890.5" cy="796.0" rx="6.3" ry="4" fill="#f49aa6"/><ellipse cx="890.5" cy="796.5" rx="2" ry="1.2" fill="#f0c070"/></g><rect x="874" y="778" width="20" height="13" fill="#464646"/><text x="884.0" y="789" font-size="11" fill="#f0f0f0" text-anchor="middle" font-family="Liberation Sans, sans-serif">19</text><circle cx="886.5" cy="818.5" r="1.6" fill="#d6d6d6"/><circle cx="878.5" cy="822.5" r="1.6" fill="#8c8c8c"/><circle cx="883.3" cy="822.5" r="1.6" fill="#b0b0b0"/><circle cx="880.5" cy="826.5" r="1.6" fill="#9a9a9a"/><rect x="892" y="826" width="2" height="2" fill="#e8e8e8"/><rect x="895" y="826" width="2" height="2" fill="#e8e8e8"/><rect x="898" y="826" width="2" height="2" fill="#e8e8e8"/><path d="M902.5 821 L906 825.5 L909.5 821" fill="none" stroke="#d0d0d0" stroke-width="1"/><rect x="915" y="773" width="45" height="59" fill="#535353"/><rect x="920" y="779" width="36" height="36" fill="#3e3e3e"/><rect x="921" y="780" width="34" height="34" fill="#ffffff"/><g clip-path="url(#th20)"><ellipse cx="939" cy="799" rx="7" ry="3.5" fill="#d4d8f6" opacity="0.80"/><ellipse cx="936.5" cy="797.5" rx="6.5" ry="4.5" fill="#f5a11c"/><ellipse cx="936.5" cy="796.0" rx="6.3" ry="4" fill="#f49aa6"/><ellipse cx="936.5" cy="796.5" rx="2" ry="1.2" fill="#f0c070"/></g><rect x="920" y="778" width="20" height="13" fill="#464646"/><text x="930.0" y="789" font-size="11" fill="#f0f0f0" text-anchor="middle" font-family="Liberation Sans, sans-serif">20</text><circle cx="932.5" cy="818.5" r="1.6" fill="#d6d6d6"/><circle cx="924.5" cy="822.5" r="1.6" fill="#8c8c8c"/><circle cx="929.3" cy="822.5" r="1.6" fill="#b0b0b0"/><circle cx="926.5" cy="826.5" r="1.6" fill="#9a9a9a"/><rect x="938" y="826" width="2" height="2" fill="#e8e8e8"/><rect x="941" y="826" width="2" height="2" fill="#e8e8e8"/><rect x="944" y="826" width="2" height="2" fill="#e8e8e8"/><path d="M948.5 821 L952 825.5 L955.5 821" fill="none" stroke="#d0d0d0" stroke-width="1"/><rect x="961" y="773" width="45" height="59" fill="#535353"/><rect x="966" y="779" width="36" height="36" fill="#3e3e3e"/><rect x="967" y="780" width="34" height="34" fill="#ffffff"/><g clip-path="url(#th21)"><ellipse cx="985" cy="799" rx="7" ry="3.5" fill="#d4d8f6" opacity="0.80"/><ellipse cx="982.5" cy="797.5" rx="6.5" ry="4.5" fill="#f5a11c"/><ellipse cx="982.5" cy="796.0" rx="6.3" ry="4" fill="#f49aa6"/><ellipse cx="982.5" cy="796.5" rx="2" ry="1.2" fill="#f0c070"/></g><rect x="966" y="778" width="20" height="13" fill="#464646"/><text x="976.0" y="789" font-size="11" fill="#f0f0f0" text-anchor="middle" font-family="Liberation Sans, sans-serif">21</text><circle cx="978.5" cy="818.5" r="1.6" fill="#d6d6d6"/><circle cx="970.5" cy="822.5" r="1.6" fill="#8c8c8c"/><circle cx="975.3" cy="822.5" r="1.6" fill="#b0b0b0"/><circle cx="972.5" cy="826.5" r="1.6" fill="#9a9a9a"/><rect x="984" y="826" width="2" height="2" fill="#e8e8e8"/><rect x="987" y="826" width="2" height="2" fill="#e8e8e8"/><rect x="990" y="826" width="2" height="2" fill="#e8e8e8"/><path d="M994.5 821 L998 825.5 L1001.5 821" fill="none" stroke="#d0d0d0" stroke-width="1"/><rect x="1007" y="773" width="45" height="59" fill="#535353"/><rect x="1012" y="779" width="36" height="36" fill="#3e3e3e"/><rect x="1013" y="780" width="34" height="34" fill="#ffffff"/><g clip-path="url(#th22)"><ellipse cx="1031" cy="799" rx="7" ry="3.5" fill="#d4d8f6" opacity="0.80"/><ellipse cx="1028.5" cy="797.5" rx="6.5" ry="4.5" fill="#f5a11c"/><ellipse cx="1028.5" cy="796.0" rx="6.3" ry="4" fill="#f49aa6"/><ellipse cx="1028.5" cy="796.5" rx="2" ry="1.2" fill="#f0c070"/></g><rect x="1012" y="778" width="20" height="13" fill="#464646"/><text x="1022.0" y="789" font-size="11" fill="#f0f0f0" text-anchor="middle" font-family="Liberation Sans, sans-serif">22</text><circle cx="1024.5" cy="818.5" r="1.6" fill="#d6d6d6"/><circle cx="1016.5" cy="822.5" r="1.6" fill="#8c8c8c"/><circle cx="1021.3" cy="822.5" r="1.6" fill="#b0b0b0"/><circle cx="1018.5" cy="826.5" r="1.6" fill="#9a9a9a"/><rect x="1030" y="826" width="2" height="2" fill="#e8e8e8"/><rect x="1033" y="826" width="2" height="2" fill="#e8e8e8"/><rect x="1036" y="826" width="2" height="2" fill="#e8e8e8"/><path d="M1040.5 821 L1044 825.5 L1047.5 821" fill="none" stroke="#d0d0d0" stroke-width="1"/><rect x="1053" y="773" width="45" height="59" fill="#535353"/><rect x="1058" y="779" width="36" height="36" fill="#3e3e3e"/><rect x="1059" y="780" width="34" height="34" fill="#ffffff"/><g clip-path="url(#th23)"><ellipse cx="1077" cy="799" rx="7" ry="3.5" fill="#d4d8f6" opacity="0.80"/><ellipse cx="1074.5" cy="797.5" rx="6.5" ry="4.5" fill="#f5a11c"/><ellipse cx="1074.5" cy="796.0" rx="6.3" ry="4" fill="#f49aa6"/><ellipse cx="1074.5" cy="796.5" rx="2" ry="1.2" fill="#f0c070"/></g><rect x="1058" y="778" width="20" height="13" fill="#464646"/><text x="1068.0" y="789" font-size="11" fill="#f0f0f0" text-anchor="middle" font-family="Liberation Sans, sans-serif">23</text><circle cx="1070.5" cy="818.5" r="1.6" fill="#d6d6d6"/><circle cx="1062.5" cy="822.5" r="1.6" fill="#8c8c8c"/><circle cx="1067.3" cy="822.5" r="1.6" fill="#b0b0b0"/><circle cx="1064.5" cy="826.5" r="1.6" fill="#9a9a9a"/><rect x="1076" y="826" width="2" height="2" fill="#e8e8e8"/><rect x="1079" y="826" width="2" height="2" fill="#e8e8e8"/><rect x="1082" y="826" width="2" height="2" fill="#e8e8e8"/><path d="M1086.5 821 L1090 825.5 L1093.5 821" fill="none" stroke="#d0d0d0" stroke-width="1"/><rect x="1099" y="773" width="45" height="59" fill="#535353"/><rect x="1104" y="779" width="36" height="36" fill="#3e3e3e"/><rect x="1105" y="780" width="34" height="34" fill="#ffffff"/><g clip-path="url(#th24)"><ellipse cx="1123" cy="799" rx="7" ry="3.5" fill="#d4d8f6" opacity="0.80"/><ellipse cx="1120.5" cy="797.5" rx="6.5" ry="4.5" fill="#f5a11c"/><ellipse cx="1120.5" cy="796.0" rx="6.3" ry="4" fill="#f49aa6"/><ellipse cx="1120.5" cy="796.5" rx="2" ry="1.2" fill="#f0c070"/></g><rect x="1104" y="778" width="20" height="13" fill="#464646"/><text x="1114.0" y="789" font-size="11" fill="#f0f0f0" text-anchor="middle" font-family="Liberation Sans, sans-serif">24</text><circle cx="1116.5" cy="818.5" r="1.6" fill="#d6d6d6"/><circle cx="1108.5" cy="822.5" r="1.6" fill="#8c8c8c"/><circle cx="1113.3" cy="822.5" r="1.6" fill="#b0b0b0"/><circle cx="1110.5" cy="826.5" r="1.6" fill="#9a9a9a"/><rect x="1122" y="826" width="2" height="2" fill="#e8e8e8"/><rect x="1125" y="826" width="2" height="2" fill="#e8e8e8"/><rect x="1128" y="826" width="2" height="2" fill="#e8e8e8"/><path d="M1132.5 821 L1136 825.5 L1139.5 821" fill="none" stroke="#d0d0d0" stroke-width="1"/><rect x="1145" y="773" width="45" height="59" fill="#535353"/><rect x="1150" y="779" width="36" height="36" fill="#3e3e3e"/><rect x="1151" y="780" width="34" height="34" fill="#ffffff"/><g clip-path="url(#th25)"><ellipse cx="1169" cy="799" rx="7" ry="3.5" fill="#d4d8f6" opacity="0.80"/><ellipse cx="1166.5" cy="797.5" rx="6.5" ry="4.5" fill="#f5a11c"/><ellipse cx="1166.5" cy="796.0" rx="6.3" ry="4" fill="#f49aa6"/><ellipse cx="1166.5" cy="796.5" rx="2" ry="1.2" fill="#f0c070"/></g><rect x="1150" y="778" width="20" height="13" fill="#464646"/><text x="1160.0" y="789" font-size="11" fill="#f0f0f0" text-anchor="middle" font-family="Liberation Sans, sans-serif">25</text><circle cx="1162.5" cy="818.5" r="1.6" fill="#d6d6d6"/><circle cx="1154.5" cy="822.5" r="1.6" fill="#8c8c8c"/><circle cx="1159.3" cy="822.5" r="1.6" fill="#b0b0b0"/><circle cx="1156.5" cy="826.5" r="1.6" fill="#9a9a9a"/><rect x="1168" y="826" width="2" height="2" fill="#e8e8e8"/><rect x="1171" y="826" width="2" height="2" fill="#e8e8e8"/><rect x="1174" y="826" width="2" height="2" fill="#e8e8e8"/><path d="M1178.5 821 L1182 825.5 L1185.5 821" fill="none" stroke="#d0d0d0" stroke-width="1"/><rect x="1191" y="773" width="45" height="59" fill="#535353"/><rect x="1196" y="779" width="36" height="36" fill="#3e3e3e"/><rect x="1197" y="780" width="34" height="34" fill="#ffffff"/><g clip-path="url(#th26)"><ellipse cx="1215" cy="799" rx="7" ry="3.5" fill="#d4d8f6" opacity="0.80"/><ellipse cx="1212.5" cy="797.5" rx="6.5" ry="4.5" fill="#f5a11c"/><ellipse cx="1212.5" cy="796.0" rx="6.3" ry="4" fill="#f49aa6"/><ellipse cx="1212.5" cy="796.5" rx="2" ry="1.2" fill="#f0c070"/></g><rect x="1196" y="778" width="20" height="13" fill="#464646"/><text x="1206.0" y="789" font-size="11" fill="#f0f0f0" text-anchor="middle" font-family="Liberation Sans, sans-serif">26</text><circle cx="1208.5" cy="818.5" r="1.6" fill="#d6d6d6"/><circle cx="1200.5" cy="822.5" r="1.6" fill="#8c8c8c"/><circle cx="1205.3" cy="822.5" r="1.6" fill="#b0b0b0"/><circle cx="1202.5" cy="826.5" r="1.6" fill="#9a9a9a"/><rect x="1214" y="826" width="2" height="2" fill="#e8e8e8"/><rect x="1217" y="826" width="2" height="2" fill="#e8e8e8"/><rect x="1220" y="826" width="2" height="2" fill="#e8e8e8"/><path d="M1224.5 821 L1228 825.5 L1231.5 821" fill="none" stroke="#d0d0d0" stroke-width="1"/><rect x="1237" y="773" width="45" height="59" fill="#535353"/><rect x="1242" y="779" width="36" height="36" fill="#3e3e3e"/><rect x="1243" y="780" width="34" height="34" fill="#ffffff"/><g clip-path="url(#th27)"><ellipse cx="1261" cy="799" rx="7" ry="3.5" fill="#d4d8f6" opacity="0.80"/><ellipse cx="1258.5" cy="797.5" rx="6.5" ry="4.5" fill="#f5a11c"/><ellipse cx="1258.5" cy="796.0" rx="6.3" ry="4" fill="#f49aa6"/><ellipse cx="1258.5" cy="796.5" rx="2" ry="1.2" fill="#f0c070"/></g><rect x="1242" y="778" width="20" height="13" fill="#464646"/><text x="1252.0" y="789" font-size="11" fill="#f0f0f0" text-anchor="middle" font-family="Liberation Sans, sans-serif">27</text><circle cx="1254.5" cy="818.5" r="1.6" fill="#d6d6d6"/><circle cx="1246.5" cy="822.5" r="1.6" fill="#8c8c8c"/><circle cx="1251.3" cy="822.5" r="1.6" fill="#b0b0b0"/><circle cx="1248.5" cy="826.5" r="1.6" fill="#9a9a9a"/><rect x="1260" y="826" width="2" height="2" fill="#e8e8e8"/><rect x="1263" y="826" width="2" height="2" fill="#e8e8e8"/><rect x="1266" y="826" width="2" height="2" fill="#e8e8e8"/><path d="M1270.5 821 L1274 825.5 L1277.5 821" fill="none" stroke="#d0d0d0" stroke-width="1"/><rect x="1283" y="773" width="45" height="59" fill="#535353"/><rect x="1288" y="779" width="36" height="36" fill="#3e3e3e"/><rect x="1289" y="780" width="34" height="34" fill="#ffffff"/><g clip-path="url(#th28)"><ellipse cx="1307" cy="799" rx="7" ry="3.5" fill="#d4d8f6" opacity="0.80"/><ellipse cx="1304.5" cy="797.5" rx="6.5" ry="4.5" fill="#f5a11c"/><ellipse cx="1304.5" cy="796.0" rx="6.3" ry="4" fill="#f49aa6"/><ellipse cx="1304.5" cy="796.5" rx="2" ry="1.2" fill="#f0c070"/></g><rect x="1288" y="778" width="20" height="13" fill="#464646"/><text x="1298.0" y="789" font-size="11" fill="#f0f0f0" text-anchor="middle" font-family="Liberation Sans, sans-serif">28</text><circle cx="1300.5" cy="818.5" r="1.6" fill="#d6d6d6"/><circle cx="1292.5" cy="822.5" r="1.6" fill="#8c8c8c"/><circle cx="1297.3" cy="822.5" r="1.6" fill="#b0b0b0"/><circle cx="1294.5" cy="826.5" r="1.6" fill="#9a9a9a"/><rect x="1306" y="826" width="2" height="2" fill="#e8e8e8"/><rect x="1309" y="826" width="2" height="2" fill="#e8e8e8"/><rect x="1312" y="826" width="2" height="2" fill="#e8e8e8"/><path d="M1316.5 821 L1320 825.5 L1323.5 821" fill="none" stroke="#d0d0d0" stroke-width="1"/></g></svg>
<!-- TIMELINE BOTTOM -->
<div class="t" style="left:81px;top:839px;color:#e8e8e8">永远</div>
<svg style="left:0;top:0" width="1312" height="860">
<rect x="70" y="836" width="1" height="22" fill="#3c3c3c"/><rect x="131" y="836" width="1" height="22" fill="#3c3c3c"/><rect x="248" y="836" width="1" height="22" fill="#3c3c3c"/>
<g fill="#dcdcdc"><rect x="49" y="841" width="4" height="2"/><rect x="49" y="845" width="4" height="2"/><rect x="49" y="849" width="4" height="2"/><rect x="55" y="839" width="2" height="12"/><rect x="53" y="839" width="6" height="1.5"/><rect x="58" y="841" width="5" height="2"/><rect x="58" y="845" width="4" height="2"/><rect x="58" y="849" width="5" height="2"/></g>
<rect x="120" y="841" width="7" height="1.5" fill="#111"/><path d="M120 843 H127.5 L123.75 848 Z" fill="#dcdcdc"/>
<g fill="#8c8c8c"><rect x="141" y="842" width="2" height="8"/><path d="M151.5 842 V850 L144 846 Z"/></g>
<g fill="#dcdcdc"><path d="M175 842 V850 L168 846 Z"/><rect x="177" y="842" width="2.5" height="8"/>
<path d="M200 841 V851 L210 846 Z"/>
<rect x="229" y="842" width="2.5" height="8"/><path d="M233 842 V850 L240 846 Z"/></g>
<g fill="#9a9a9a"><circle cx="258" cy="842" r="1"/><circle cx="261" cy="844" r="1.3"/><circle cx="264" cy="846.5" r="1.6"/></g><circle cx="267" cy="848.5" r="2.2" fill="#dcdcdc"/>
<path d="M287.5 841.5 H297.5 V851.5 H292 L287.5 847 Z" fill="none" stroke="#dcdcdc" stroke-width="1.2"/><path d="M287.5 847 H292 V851.5 Z" fill="#dcdcdc"/><path d="M293 842 H297 V846 Z" fill="#dcdcdc" opacity="0"/>
<path d="M315.5 842.5 H326 M318.5 842.5 V840.5 H323 V842.5 M316.5 843.5 L317.5 852 H324 L325 843.5 M319 845 V850 M321 845 V850 M323 845 V850" fill="none" stroke="#dcdcdc" stroke-width="1.2"/>
<path d="M349 843 L345.5 847 L349 851" fill="none" stroke="#a8a8a8"/>
<path d="M1279 843 L1282.5 847 L1279 851" fill="none" stroke="#8a8a8a"/>
</svg>
<!-- RIGHT PANELS -->
<svg style="left:0;top:0" width="1600" height="860">
<path d="M1586 67 L1589 69.5 L1586 72 Z M1590 67 L1593 69.5 L1590 72 Z" fill="#c8c8c8"/>
<!-- swatches panel -->
<rect x="1355" y="75" width="245" height="27" fill="#424242"/>
<rect x="1355" y="75" width="43" height="27" fill="#484848"/>
<rect x="1398" y="75" width="42" height="28" fill="#535353"/>
<rect x="1397" y="75" width="1" height="27" fill="#3e3e3e"/>
<path d="M1583 85.5 H1593 M1583 87.5 H1593 M1583 89.5 H1593 M1583 91.5 H1593" stroke="#c8c8c8" stroke-width="1"/>
<rect x="1355" y="102" width="245" height="233" fill="#535353"/>
<rect x="1359" y="111" width="232" height="1" fill="#444"/>
<rect x="1359" y="129" width="232" height="1" fill="#444"/>
<rect x="1359" y="111" width="1" height="19" fill="#444"/>
<rect x="1360" y="112" width="81" height="17" fill="#3a3a3a"/>
<rect x="1361" y="113" width="15" height="15" fill="#ff0000"/><rect x="1377" y="113" width="15" height="15" fill="#000"/><rect x="1393" y="113" width="15" height="15" fill="#fff"/><rect x="1409" y="113" width="15" height="15" fill="#fff"/><rect x="1425" y="113" width="15" height="15" fill="#000"/>
<rect x="1355" y="133" width="216" height="177" fill="#414141"/>
<rect x="1355" y="134" width="17" height="17" fill="#ff0000"/><rect x="1373" y="134" width="17" height="17" fill="#ffff00"/><rect x="1391" y="134" width="17" height="17" fill="#00ff00"/><rect x="1409" y="134" width="17" height="17" fill="#00ffff"/><rect x="1427" y="134" width="17" height="17" fill="#0000ff"/><rect x="1445" y="134" width="17" height="17" fill="#ff00ff"/><rect x="1463" y="134" width="17" height="17" fill="#ffffff"/><rect x="1481" y="134" width="17" height="17" fill="#ebe6e6"/><rect x="1499" y="134" width="17" height="17" fill="#d9d9d9"/><rect x="1517" y="134" width="17" height="17" fill="#cdcdc9"/><rect x="1535" y="134" width="17" height="17" fill="#b3b3b3"/><rect x="1553" y="134" width="17" height="17" fill="#b4b4b4"/><rect x="1355" y="152" width="17" height="17" fill="#a6a6a6"/><rect x="1373" y="152" width="17" height="17" fill="#999999"/><rect x="1391" y="152" width="17" height="17" fill="#8c8c8c"/><rect x="1409" y="152" width="17" height="17" fill="#888888"/><rect x="1427" y="152" width="17" height="17" fill="#ed1c24"/><rect x="1445" y="152" width="17" height="17" fill="#ffff00"/><rect x="1463" y="152" width="17" height="17" fill="#00a651"/><rect x="1481" y="152" width="17" height="17" fill="#00bff3"/><rect x="1499" y="152" width="17" height="17" fill="#534f8f"/><rect x="1517" y="152" width="17" height="17" fill="#ec008c"/><rect x="1535" y="152" width="17" height="17" fill="#6d6d6d"/><rect x="1553" y="152" width="17" height="17" fill="#666666"/><rect x="1355" y="170" width="17" height="17" fill="#4f4f4f"/><rect x="1373" y="170" width="17" height="17" fill="#444444"/><rect x="1391" y="170" width="17" height="17" fill="#3d3d3d"/><rect x="1409" y="170" width="17" height="17" fill="#303030"/><rect x="1427" y="170" width="17" height="17" fill="#262626"/><rect x="1445" y="170" width="17" height="17" fill="#111111"/><rect x="1463" y="170" width="17" height="17" fill="#0a0a0a"/><rect x="1481" y="170" width="17" height="17" fill="#000000"/><rect x="1499" y="170" width="17" height="17" fill="#f9977a"/><rect x="1517" y="170" width="17" height="17" fill="#f8ad82"/><rect x="1535" y="170" width="17" height="17" fill="#f7c38c"/><rect x="1553" y="170" width="17" height="17" fill="#fff9b0"/><rect x="1355" y="188" width="17" height="17" fill="#c7e09e"/><rect x="1373" y="188" width="17" height="17" fill="#a3d39c"/><rect x="1391" y="188" width="17" height="17" fill="#82ca9c"/><rect x="1409" y="188" width="17" height="17" fill="#7accc8"/><rect x="1427" y="188" width="17" height="17" fill="#6dcff6"/><rect x="1445" y="188" width="17" height="17" fill="#85a9d8"/><rect x="1463" y="188" width="17" height="17" fill="#9d87ca"/><rect x="1481" y="188" width="17" height="17" fill="#9585cc"/><rect x="1499" y="188" width="17" height="17" fill="#9485cc"/><rect x="1517" y="188" width="17" height="17" fill="#bd8cbf"/><rect x="1535" y="188" width="17" height="17" fill="#f49eb4"/><rect x="1553" y="188" width="17" height="17" fill="#f69e9b"/><rect x="1355" y="206" width="17" height="17" fill="#f7834a"/><rect x="1373" y="206" width="17" height="17" fill="#f7834a"/><rect x="1391" y="206" width="17" height="17" fill="#f7ae82"/><rect x="1409" y="206" width="17" height="17" fill="#fff36c"/><rect x="1427" y="206" width="17" height="17" fill="#acd373"/><rect x="1445" y="206" width="17" height="17" fill="#7cc576"/><rect x="1463" y="206" width="17" height="17" fill="#3bb878"/><rect x="1481" y="206" width="17" height="17" fill="#1abbb4"/><rect x="1499" y="206" width="17" height="17" fill="#00bff3"/><rect x="1517" y="206" width="17" height="17" fill="#4f91c4"/><rect x="1535" y="206" width="17" height="17" fill="#4f91c4"/><rect x="1553" y="206" width="17" height="17" fill="#855ea8"/><rect x="1355" y="224" width="17" height="17" fill="#8560a8"/><rect x="1373" y="224" width="17" height="17" fill="#a864a8"/><rect x="1391" y="224" width="17" height="17" fill="#f06eaa"/><rect x="1409" y="224" width="17" height="17" fill="#f26d7d"/><rect x="1427" y="224" width="17" height="17" fill="#ed1c24"/><rect x="1445" y="224" width="17" height="17" fill="#f7834a"/><rect x="1463" y="224" width="17" height="17" fill="#f7941d"/><rect x="1481" y="224" width="17" height="17" fill="#ffff00"/><rect x="1499" y="224" width="17" height="17" fill="#8dc63f"/><rect x="1517" y="224" width="17" height="17" fill="#00a651"/><rect x="1535" y="224" width="17" height="17" fill="#00a651"/><rect x="1553" y="224" width="17" height="17" fill="#00a99d"/><rect x="1355" y="242" width="17" height="17" fill="#00bff3"/><rect x="1373" y="242" width="17" height="17" fill="#4458c4"/><rect x="1391" y="242" width="17" height="17" fill="#0076a3"/><rect x="1409" y="242" width="17" height="17" fill="#534f8f"/><rect x="1427" y="242" width="17" height="17" fill="#534f8f"/><rect x="1445" y="242" width="17" height="17" fill="#92278f"/><rect x="1463" y="242" width="17" height="17" fill="#ec008c"/><rect x="1481" y="242" width="17" height="17" fill="#ed1c24"/><rect x="1499" y="242" width="17" height="17" fill="#9e005d"/><rect x="1517" y="242" width="17" height="17" fill="#a0570f"/><rect x="1535" y="242" width="17" height="17" fill="#a0570f"/><rect x="1553" y="242" width="17" height="17" fill="#978f4c"/><rect x="1355" y="260" width="17" height="17" fill="#686220"/><rect x="1373" y="260" width="17" height="17" fill="#5a5428"/><rect x="1391" y="260" width="17" height="17" fill="#5a5428"/><rect x="1409" y="260" width="17" height="17" fill="#5f5f5f"/><rect x="1427" y="260" width="17" height="17" fill="#0076a3"/><rect x="1445" y="260" width="17" height="17" fill="#524f8f"/><rect x="1463" y="260" width="17" height="17" fill="#474747"/><rect x="1481" y="260" width="17" height="17" fill="#3a3a3a"/><rect x="1499" y="260" width="17" height="17" fill="#444444"/><rect x="1517" y="260" width="17" height="17" fill="#505050"/><rect x="1535" y="260" width="17" height="17" fill="#9e005d"/><rect x="1553" y="260" width="17" height="17" fill="#9e005d"/><rect x="1355" y="278" width="17" height="17" fill="#5a5428"/><rect x="1373" y="278" width="17" height="17" fill="#5a5528"/><rect x="1391" y="278" width="17" height="17" fill="#686420"/><rect x="1409" y="278" width="17" height="17" fill="#7d7a36"/><rect x="1427" y="278" width="17" height="17" fill="#5a5428"/><rect x="1445" y="278" width="17" height="17" fill="#403f20"/><rect x="1463" y="278" width="17" height="17" fill="#403f20"/><rect x="1481" y="278" width="17" height="17" fill="#464646"/><rect x="1499" y="278" width="17" height="17" fill="#534f8f"/><rect x="1517" y="278" width="17" height="17" fill="#464646"/><rect x="1535" y="278" width="17" height="17" fill="#3a3a3a"/><rect x="1553" y="278" width="17" height="17" fill="#2a2a2a"/><rect x="1355" y="296" width="17" height="14" fill="#3a3a3a"/><rect x="1373" y="296" width="17" height="14" fill="#333333"/><rect x="1391" y="296" width="17" height="14" fill="#58554f"/><rect x="1409" y="296" width="17" height="14" fill="#5a5428"/><rect x="1427" y="296" width="17" height="14" fill="#c7b299"/><rect x="1445" y="296" width="17" height="14" fill="#8c8c8c"/><rect x="1463" y="296" width="17" height="14" fill="#6b6a52"/><rect x="1481" y="296" width="17" height="14" fill="#4a4a44"/><rect x="1499" y="296" width="17" height="14" fill="#2a2a24"/><rect x="1517" y="296" width="17" height="14" fill="#c69c6d"/><rect x="1535" y="296" width="17" height="14" fill="#a67c52"/><rect x="1553" y="296" width="17" height="14" fill="#7d7a42"/>
<rect x="1571" y="133" width="27" height="177" fill="#4a4a4a"/>
<path d="M1588 145 L1591 142 L1594 145" fill="none" stroke="#9a9a9a"/>
<rect x="1585" y="151" width="12" height="127" fill="#6a6a6a"/>
<path d="M1588 299 L1591 302 L1594 299" fill="none" stroke="#9a9a9a"/>
<path d="M1531.5 318.5 H1541.5 V328.5 H1536 L1531.5 324 Z" fill="none" stroke="#d8d8d8" stroke-width="1.2"/><path d="M1531.5 324 H1536 V328.5 Z" fill="#d8d8d8"/>
<path d="M1559.5 319.5 H1570 M1562.5 319.5 V317.5 H1567 V319.5 M1560.5 320.5 L1561.5 329 H1568 L1569 320.5 M1563 322 V327 M1565 322 V327 M1567 322 V327" fill="none" stroke="#9a9a9a" stroke-width="1.1"/>
<rect x="1355" y="335" width="245" height="3" fill="#383838"/>
<!-- library panel -->
<rect x="1355" y="338" width="245" height="28" fill="#424242"/>
<rect x="1355" y="338" width="38" height="28" fill="#535353"/>
<rect x="1393" y="338" width="43" height="28" fill="#484848"/>
<rect x="1436" y="338" width="1" height="28" fill="#3e3e3e"/>
<path d="M1583 348.5 H1593 M1583 350.5 H1593 M1583 352.5 H1593 M1583 354.5 H1593" stroke="#c8c8c8" stroke-width="1"/>
<rect x="1355" y="366" width="245" height="232" fill="#535353"/>
<rect x="1363.5" y="374.5" width="171" height="18" rx="3" fill="#454545" stroke="#3e3e3e"/>
<path d="M1522 382 L1526 386 L1530 382" fill="none" stroke="#c0c0c0"/>
<rect x="1542.5" y="372.5" width="21" height="22" rx="3" fill="#383838" stroke="#3a3a3a"/>
<g fill="#e8e8e8"><rect x="1548" y="378" width="5" height="5"/><rect x="1554" y="378" width="5" height="5"/><rect x="1548" y="384" width="5" height="5"/><rect x="1554" y="384" width="5" height="5"/></g>
<path d="M1572 378.5 H1585 M1572 381.5 H1585 M1572 384.5 H1585 M1572 387.5 H1585" stroke="#e8e8e8" stroke-width="1.5"/>
<circle cx="1369" cy="411" r="3.6" fill="none" stroke="#d0d0d0" stroke-width="1.5"/><path d="M1366.5 413.5 L1363.5 416.5" stroke="#d0d0d0" stroke-width="2"/>
<path d="M1580 411 L1583.5 414.5 L1587 411" fill="none" stroke="#b8b8b8"/>
<rect x="1363" y="422" width="228" height="1" fill="#6a6a6a"/>
<rect x="1355" y="428" width="245" height="2" fill="#474747"/>
<rect x="1355" y="430" width="245" height="143" fill="#4e4e4e"/>
<rect x="1583" y="430" width="15" height="143" fill="#4a4a4a"/>
<path d="M1587 443 L1590.5 439.5 L1594 443" fill="none" stroke="#9a9a9a"/>
<rect x="1585" y="446" width="12" height="59" fill="#666666"/>
<path d="M1587 561 L1590.5 564.5 L1594 561" fill="none" stroke="#9a9a9a"/>
<circle cx="1469" cy="488" r="47" fill="none" stroke="#8a8a8a" stroke-width="2" stroke-dasharray="5.5 4.3"/>
<path d="M1462 488 H1476 M1469 481 V495" stroke="#8a8a8a" stroke-width="2.2"/>
<rect x="1355" y="573" width="245" height="25" fill="#535353"/>
<path d="M1366 586.5 H1377 M1371.5 581 V592" stroke="#f0f0f0" stroke-width="2"/><rect x="1377" y="591" width="2" height="1.5" fill="#f0f0f0"/>
<path d="M1397 580 L1402.5 585.5 H1399.5 V588 H1394.5 V585.5 H1391.5 Z" fill="#f0f0f0"/><path d="M1391 590 H1404 M1391 592.5 H1404" stroke="#f0f0f0" stroke-width="1.2"/>
<path d="M1543 591 C1539 591 1539 585 1543 585 C1544 581 1551 581 1552 585 C1556 585 1556 591 1552 591" fill="none" stroke="#e0e0e0" stroke-width="1.4"/><circle cx="1546" cy="589" r="2.8" fill="none" stroke="#e0e0e0" stroke-width="1.3"/><path d="M1551 590 L1555 594 M1555 590 L1551 594" stroke="#e0e0e0" stroke-width="1.3"/>
<path d="M1565.5 582.5 H1576 M1568.5 582.5 V580.5 H1573 V582.5 M1566.5 583.5 L1567.5 592 H1574 L1575 583.5 M1569 585 V590 M1571 585 V590 M1573 585 V590" fill="none" stroke="#8a8a8a" stroke-width="1.1"/>
<rect x="1355" y="598" width="245" height="3" fill="#383838"/>
<!-- layers panel -->
<rect x="1355" y="601" width="245" height="27" fill="#424242"/>
<rect x="1355" y="601" width="43" height="28" fill="#535353"/>
<rect x="1398" y="601" width="43" height="27" fill="#484848"/>
<rect x="1441" y="601" width="44" height="27" fill="#484848"/>
<rect x="1441" y="601" width="1" height="27" fill="#3e3e3e"/><rect x="1485" y="601" width="1" height="27" fill="#3e3e3e"/>
<path d="M1583 610.5 H1593 M1583 612.5 H1593 M1583 614.5 H1593 M1583 616.5 H1593" stroke="#c8c8c8" stroke-width="1"/>
<rect x="1355" y="628" width="245" height="113" fill="#535353"/>
<rect x="1359.5" y="636.5" width="86" height="20" rx="3" fill="#454545" stroke="#3e3e3e"/>
<circle cx="1373" cy="645" r="3.4" fill="none" stroke="#e0e0e0" stroke-width="1.4"/><path d="M1370.7 647.3 L1367.5 650.5" stroke="#e0e0e0" stroke-width="1.8"/>
<path d="M1435 644 L1439 648 L1443 644" fill="none" stroke="#c0c0c0"/>
<rect x="1462" y="641" width="11" height="9" fill="none" stroke="#d8d8d8" stroke-width="1.2"/><path d="M1463.5 648.5 L1466 645 L1468 647 L1469.5 645.5 L1471.5 648.5 Z" fill="#d8d8d8"/>
<circle cx="1491.5" cy="646" r="5" fill="none" stroke="#d8d8d8" stroke-width="1.2"/><path d="M1495 642.5 A5 5 0 0 1 1488 649.5 Z" fill="#d8d8d8"/>
<path d="M1510.5 641 H1521 V644 H1520 C1520 642.5 1519 642.3 1517 642.3 V650 H1518.5 V651 H1513 V650 H1514.5 V642.3 C1512.5 642.3 1511.5 642.5 1511.5 644 H1510.5 Z" fill="#d8d8d8"/>
<rect x="1535.5" y="641.5" width="9" height="9" fill="none" stroke="#d8d8d8" stroke-width="1.2"/><g fill="#d8d8d8"><rect x="1534" y="640" width="3" height="3"/><rect x="1543" y="640" width="3" height="3"/><rect x="1534" y="649" width="3" height="3"/><rect x="1543" y="649" width="3" height="3"/></g>
<path d="M1561 640.5 H1565.5 L1568.5 643.5 V651.5 H1561 Z" fill="none" stroke="#d8d8d8" stroke-width="1.2"/><rect x="1558" y="646" width="6" height="6" fill="#d8d8d8"/>
<rect x="1586.5" y="638.5" width="10" height="17" rx="5" fill="#4a4a4a" stroke="#3e3e3e"/><circle cx="1591.5" cy="643.5" r="3.8" fill="#e8e8e8"/>
<rect x="1355" y="660" width="245" height="1" fill="#484848"/>
<rect x="1359.5" y="663.5" width="117" height="19" rx="3" fill="#535353" stroke="#4a4a4a"/>
<path d="M1464 671 L1468 675 L1472 671" fill="none" stroke="#6e6e6e"/>
<rect x="1541.5" y="663.5" width="55" height="19" rx="3" fill="#535353" stroke="#4a4a4a"/><rect x="1579" y="664" width="1" height="18" fill="#4a4a4a"/>
<path d="M1584 671 L1588 675 L1592 671" fill="none" stroke="#6a6a6a"/>
<rect x="1355" y="687" width="245" height="1" fill="#484848"/>
<rect x="1527.5" y="693.5" width="13" height="13" rx="2" fill="#6a6a6a"/><path d="M1530.5 700 L1533 702.5 L1537.5 697" fill="none" stroke="#4a4a4a" stroke-width="1.6"/>
<rect x="1355" y="714" width="245" height="1" fill="#484848"/>
<rect x="1541.5" y="717.5" width="55" height="19" rx="3" fill="#535353" stroke="#4a4a4a"/><rect x="1579" y="718" width="1" height="18" fill="#4a4a4a"/>
<path d="M1584 725 L1588 729 L1592 725" fill="none" stroke="#6a6a6a"/>
</svg>
<!-- RIGHT TEXT -->
<div class="t" style="left:1364px;top:83px;color:#b8b8b8">颜色</div>
<div class="t" style="left:1408px;top:83px;color:#f0f0f0">色板</div>
<div class="t" style="left:1364px;top:346px;color:#f0f0f0">库</div>
<div class="t" style="left:1403px;top:346px;color:#b8b8b8">调整</div>
<div class="t" style="left:1374px;top:378px;color:#f4f4f4;font-weight:bold">我的库</div>
<div class="t" style="left:1384px;top:406px;color:#737373;transform:scaleX(0.9);transform-origin:0 0">搜索 Adobe Stock</div>
<div class="t" style="left:1441px;top:557px;font-size:14px;color:#e4e4e4">拖放资料</div>
<div class="t" style="left:1365px;top:609px;color:#f0f0f0">图层</div>
<div class="t" style="left:1407px;top:609px;color:#b8b8b8">通道</div>
<div class="t" style="left:1451px;top:609px;color:#b8b8b8">路径</div>
<div class="t" style="left:1382px;top:641px;color:#f4f4f4">类型</div>
<div class="t" style="left:1368px;top:668px;color:#9a9a9a">正常</div>
<div class="t" style="left:1485px;top:668px;color:#a8a8a8">不透明度:</div>
<div class="t" style="left:1544px;top:668px;color:#6e6e6e">100%</div>
<div class="t" style="left:1363px;top:694px;color:#a0a0a0">统一:</div>
<div class="t" style="left:1548px;top:694px;color:#a0a0a0">传播帧</div>
<div class="t" style="left:1589px;top:694px;color:#8a8a8a">1</div>
<div class="t" style="left:1362px;top:721px;color:#a0a0a0">锁定:</div>
<div class="t" style="left:1510px;top:721px;color:#a0a0a0">填充:</div>
<div class="t" style="left:1544px;top:721px;color:#6e6e6e">100%</div>
<!-- LAYERS CONTENT -->
<svg style="left:0;top:0" width="1600" height="860">
<g transform="rotate(45 1404 700)" fill="#a8a8a8"><rect x="1401" y="690.5" width="6" height="2"/><rect x="1402" y="692.5" width="4" height="6"/><path d="M1402 698.5 L1399 701.5 H1409 L1406 698.5 Z"/><rect x="1403.4" y="701.5" width="1.2" height="7"/></g>
<rect x="1402" y="703" width="9" height="5" rx="2.5" fill="#535353" stroke="#a8a8a8" stroke-width="1.2"/><path d="M1404.5 705.5 H1408.5" stroke="#a8a8a8" stroke-width="1.2"/>
<path d="M1417 699 C1421 693 1429 693 1433 699 C1429 705 1421 705 1417 699 Z" fill="#a8a8a8"/><circle cx="1425" cy="699" r="3.2" fill="#535353"/><circle cx="1425" cy="699" r="2" fill="#a8a8a8"/><circle cx="1424.5" cy="698.2" r="0.6" fill="#535353"/>
<rect x="1424" y="704" width="9" height="5" rx="2.5" fill="#535353" stroke="#a8a8a8" stroke-width="1.2"/><path d="M1426.5 706.5 H1430.5" stroke="#a8a8a8" stroke-width="1.2"/>
<text x="1440" y="707" font-size="14" font-style="italic" fill="#a8a8a8" font-family="Liberation Serif, serif">fx</text>
<rect x="1446" y="704" width="9" height="5" rx="2.5" fill="#535353" stroke="#a8a8a8" stroke-width="1.2"/><path d="M1448.5 706.5 H1452.5" stroke="#a8a8a8" stroke-width="1.2"/>
<rect x="1399" y="722" width="12" height="12" fill="#a8a8a8"/><g fill="#535353"><rect x="1400.5" y="723.5" width="3" height="3"/><rect x="1406.5" y="723.5" width="3" height="3"/><rect x="1403.5" y="726.5" width="3" height="3"/><rect x="1400.5" y="729.5" width="3" height="3"/><rect x="1406.5" y="729.5" width="3" height="3"/></g>
<path d="M1433 722 L1434 723 L1426.5 731 L1424.5 729 Z" fill="#a8a8a8"/><path d="M1423.5 729.5 C1425.5 729.5 1426.5 731 1426 732.5 C1425 734.5 1422 735 1420 735 C1421.5 733.5 1421 731 1423.5 729.5 Z" fill="#a8a8a8"/>
<path d="M1448.5 721 L1451.5 724 H1449.5 V726.8 H1452.3 V724.8 L1455.3 727.8 L1452.3 730.8 V728.8 H1449.5 V731.6 H1451.5 L1448.5 734.6 L1445.5 731.6 H1447.5 V728.8 H1444.7 V730.8 L1441.7 727.8 L1444.7 724.8 V726.8 H1447.5 V724 H1445.5 Z" fill="#a8a8a8"/>
<path d="M1466.5 723 V733 H1476 V727 L1473.5 724.5 H1466.5" fill="none" stroke="#a8a8a8" stroke-width="1.2"/><g fill="#a8a8a8"><rect x="1464" y="724" width="1.5" height="1"/><rect x="1464" y="732" width="1.5" height="1"/><rect x="1466" y="735" width="1" height="1.5"/><rect x="1475" y="735" width="1" height="1.5"/><rect x="1476" y="722" width="1" height="1"/></g>
<path d="M1489.5 727 V725 A3 3 0 0 1 1495.5 725 V727" fill="none" stroke="#a8a8a8" stroke-width="1.5"/><rect x="1487.5" y="727" width="10.5" height="7.5" fill="#a8a8a8"/><rect x="1492" y="729.5" width="1.5" height="2" fill="#535353"/>
<!-- layer list -->
<rect x="1355" y="741" width="229" height="94" fill="#535353"/>
<rect x="1355" y="741" width="245" height="1" fill="#424242"/>
<rect x="1385" y="742" width="1" height="93" fill="#4a4a4a"/>
<rect x="1355" y="780" width="229" height="1" fill="#444"/>
<rect x="1355" y="819" width="229" height="1" fill="#444"/>
<rect x="1364.5" y="755.5" width="11" height="11" fill="none" stroke="#4a4a4a" stroke-width="1"/>
<rect x="1364.5" y="794.5" width="11" height="11" fill="none" stroke="#4a4a4a" stroke-width="1"/>
<rect x="1389" y="745" width="33" height="33" fill="#222"/><rect x="1390" y="746" width="31" height="31" fill="#fff"/><ellipse cx="1406" cy="762.5" rx="6" ry="3.5" fill="#dfe0f8"/><ellipse cx="1404" cy="761" rx="6.5" ry="4.5" fill="#f5a11c"/><ellipse cx="1404" cy="759.7" rx="6.3" ry="4" fill="#f49aa6"/><ellipse cx="1404" cy="760" rx="2" ry="1.2" fill="#f0c070"/><g fill="#4a5ad8"><rect x="1399" y="753" width="1" height="1"/><rect x="1401" y="753" width="1" height="1"/><rect x="1411" y="767" width="1" height="1"/><rect x="1414" y="768" width="1" height="1"/><rect x="1417" y="769" width="1" height="1"/><rect x="1413" y="771" width="1" height="1"/><rect x="1403" y="772" width="1" height="1"/><rect x="1413" y="775" width="1" height="1"/></g>
<rect x="1389" y="784" width="33" height="33" fill="#222"/><rect x="1390" y="785" width="31" height="31" fill="#fff"/><ellipse cx="1406" cy="801.5" rx="6" ry="3.5" fill="#dfe0f8"/><ellipse cx="1404" cy="800" rx="6.5" ry="4.5" fill="#f5a11c"/><ellipse cx="1404" cy="798.7" rx="6.3" ry="4" fill="#f49aa6"/><ellipse cx="1404" cy="799" rx="2" ry="1.2" fill="#f0c070"/><g fill="#4a5ad8"><rect x="1399" y="792" width="1" height="1"/><rect x="1401" y="792" width="1" height="1"/><rect x="1411" y="806" width="1" height="1"/><rect x="1414" y="807" width="1" height="1"/><rect x="1417" y="808" width="1" height="1"/><rect x="1413" y="810" width="1" height="1"/><rect x="1403" y="811" width="1" height="1"/><rect x="1413" y="814" width="1" height="1"/></g>
<rect x="1389" y="823" width="33" height="15" fill="#222"/><rect x="1390" y="824" width="31" height="14" fill="#fff"/>
<rect x="1584" y="741" width="14" height="94" fill="#4a4a4a"/>
<path d="M1587 752 L1590.5 748.5 L1594 752" fill="none" stroke="#9a9a9a"/>
<rect x="1586" y="759" width="11" height="9" fill="#6a6a6a"/>
<path d="M1587 822 L1590.5 825.5 L1594 822" fill="none" stroke="#9a9a9a"/>
<rect x="1355" y="834" width="245" height="1" fill="#3e3e3e"/>
<rect x="1355" y="835" width="245" height="25" fill="#535353"/>
<g fill="none" stroke="#a8a8a8" stroke-width="1.5"><rect x="1396" y="842.5" width="6.5" height="6" rx="3"/><rect x="1403" y="842.5" width="6.5" height="6" rx="3"/></g><path d="M1399 845.5 H1406" stroke="#a8a8a8" stroke-width="1.5"/>
<text x="1424" y="851" font-size="13" font-style="italic" fill="#a8a8a8" font-family="Liberation Serif, serif">fx</text>
<path d="M1438 855 L1440 857 L1442 855 Z" fill="#8a8a8a"/>
<rect x="1450" y="841" width="13.5" height="10" fill="#a8a8a8"/><circle cx="1456.75" cy="846" r="2.6" fill="#535353"/>
<circle cx="1484.5" cy="846.5" r="5.3" fill="none" stroke="#d8d8d8" stroke-width="1.2"/><path d="M1488.2 842.8 A5.3 5.3 0 0 1 1480.8 850.2 Z" fill="#d8d8d8"/>
<path d="M1483 855 L1485 857 L1487 855 Z" fill="#f0f0f0"/>
<path d="M1505 841.5 H1510 L1511 842.5 H1517 V851.5 H1505 Z" fill="#d8d8d8"/>
<path d="M1533.5 841.5 H1543.5 V851.5 H1538 L1533.5 847 Z" fill="none" stroke="#d8d8d8" stroke-width="1.2"/><path d="M1533.5 847 H1538 V851.5 Z" fill="#d8d8d8"/>
<path d="M1559.5 842.5 H1570 M1562.5 842.5 V840.5 H1567 V842.5 M1560.5 843.5 L1561.5 852 H1568 L1569 843.5 M1563 845 V850 M1565 845 V850 M1567 845 V850" fill="none" stroke="#a8a8a8" stroke-width="1.1"/>
</svg>
<div class="t" style="left:1430px;top:756px;color:#f0f0f0">图层 69</div>
<div class="t" style="left:1430px;top:795px;color:#f0f0f0">图层 68</div>
<!-- ICON STRIP -->
<svg style="left:0;top:0" width="1600" height="860">
<path d="M1342 67 L1339 69.5 L1342 72 Z M1346 67 L1343 69.5 L1346 72 Z" fill="#c8c8c8"/>
<g fill="#535353" stroke="#3e3e3e" stroke-width="1">
<rect x="1314.5" y="75.5" width="37" height="41"/>
<rect x="1314.5" y="116.5" width="37" height="41"/>
<rect x="1314.5" y="157.5" width="37" height="41"/>
<rect x="1314.5" y="198.5" width="37" height="69"/>
<rect x="1314.5" y="267.5" width="37" height="41"/>
<rect x="1314.5" y="308.5" width="37" height="560"/>
</g>
<g fill="#3c3c3c"><rect x="1324" y="78" width="1" height="4"/><rect x="1326" y="78" width="1" height="4"/><rect x="1328" y="78" width="1" height="4"/><rect x="1330" y="78" width="1" height="4"/><rect x="1332" y="78" width="1" height="4"/><rect x="1334" y="78" width="1" height="4"/><rect x="1336" y="78" width="1" height="4"/><rect x="1338" y="78" width="1" height="4"/><rect x="1340" y="78" width="1" height="4"/><rect x="1342" y="78" width="1" height="4"/></g><g fill="#3c3c3c"><rect x="1324" y="119" width="1" height="4"/><rect x="1326" y="119" width="1" height="4"/><rect x="1328" y="119" width="1" height="4"/><rect x="1330" y="119" width="1" height="4"/><rect x="1332" y="119" width="1" height="4"/><rect x="1334" y="119" width="1" height="4"/><rect x="1336" y="119" width="1" height="4"/><rect x="1338" y="119" width="1" height="4"/><rect x="1340" y="119" width="1" height="4"/><rect x="1342" y="119" width="1" height="4"/></g><g fill="#3c3c3c"><rect x="1324" y="160" width="1" height="4"/><rect x="1326" y="160" width="1" height="4"/><rect x="1328" y="160" width="1" height="4"/><rect x="1330" y="160" width="1" height="4"/><rect x="1332" y="160" width="1" height="4"/><rect x="1334" y="160" width="1" height="4"/><rect x="1336" y="160" width="1" height="4"/><rect x="1338" y="160" width="1" height="4"/><rect x="1340" y="160" width="1" height="4"/><rect x="1342" y="160" width="1" height="4"/></g><g fill="#3c3c3c"><rect x="1324" y="201" width="1" height="4"/><rect x="1326" y="201" width="1" height="4"/><rect x="1328" y="201" width="1" height="4"/><rect x="1330" y="201" width="1" height="4"/><rect x="1332" y="201" width="1" height="4"/><rect x="1334" y="201" width="1" height="4"/><rect x="1336" y="201" width="1" height="4"/><rect x="1338" y="201" width="1" height="4"/><rect x="1340" y="201" width="1" height="4"/><rect x="1342" y="201" width="1" height="4"/></g><g fill="#3c3c3c"><rect x="1324" y="270" width="1" height="4"/><rect x="1326" y="270" width="1" height="4"/><rect x="1328" y="270" width="1" height="4"/><rect x="1330" y="270" width="1" height="4"/><rect x="1332" y="270" width="1" height="4"/><rect x="1334" y="270" width="1" height="4"/><rect x="1336" y="270" width="1" height="4"/><rect x="1338" y="270" width="1" height="4"/><rect x="1340" y="270" width="1" height="4"/><rect x="1342" y="270" width="1" height="4"/></g>
<g fill="none" stroke="#dcdcdc" stroke-width="1.2"><rect x="1328.5" y="90.5" width="4" height="4"/><rect x="1328.5" y="96.5" width="4" height="4"/></g>
<rect x="1328" y="102" width="5" height="5" fill="#dcdcdc"/>
<path d="M1336 91 L1340 90 L1339.5 91.5 C1342 93 1343 97 1341.5 101 C1340.5 103 1339 104.5 1337 105 C1339.5 102.5 1341 98 1338.5 93 L1337 95 Z" fill="#dcdcdc"/>
<path d="M1327 133 L1331.3 131 L1335.5 133 V138.5 L1331.3 140.5 L1327 138.5 Z" fill="#b0b0b0" stroke="#dcdcdc" stroke-width="1"/><path d="M1327 133 L1331.3 135 L1335.5 133 M1331.3 135 V140.5" fill="none" stroke="#dcdcdc" stroke-width="0.9"/><path d="M1327 133 L1331.3 131 L1335.5 133 L1331.3 135 Z" fill="#d0d0d0"/>
<rect x="1338" y="131" width="4" height="3.5" fill="#dcdcdc"/><rect x="1338" y="136" width="4" height="3.5" fill="#dcdcdc"/>
<rect x="1327" y="143" width="15" height="4" fill="#dcdcdc"/><path d="M1338 144.2 L1341 144.2 L1339.5 146 Z" fill="#535353"/>
<path d="M1325.5 172 H1334 L1338 177.5 M1325.5 172 L1336.5 189.5 H1344.5 V177.5 H1337 V189 M1326.5 173.5 V182.5 H1329.5 M1339 180 L1343 186" fill="none" stroke="#dcdcdc" stroke-width="1.1"/>
<text x="1328" y="228" font-size="15" fill="#dcdcdc" font-family="Liberation Sans, sans-serif">A</text><rect x="1341" y="213" width="1.2" height="16" fill="#dcdcdc"/>
<text x="1329" y="257" font-size="16" font-weight="bold" fill="#dcdcdc" font-family="Liberation Sans, sans-serif">¶</text>
<text x="1327" y="298" font-size="17" font-style="italic" fill="#dcdcdc" font-family="Liberation Serif, serif">A</text>
</svg>
<!-- IME -->
<svg style="left:0;top:0" width="1600" height="62">
<defs><linearGradient id="imeg" x1="0" y1="0" x2="0" y2="1"><stop offset="0" stop-color="#ffffff"/><stop offset="1" stop-color="#eef3fa"/></linearGradient></defs>
<rect x="881.5" y="3.5" width="227" height="23" fill="url(#imeg)" stroke="#86c9d4" stroke-width="1"/>
<g transform="rotate(-14 873 14)"><rect x="861" y="2" width="24" height="24" rx="2" fill="#e52a1c" stroke="#f07020" stroke-width="1"/>
<path d="M880 7.5 C877 5.5 868 5.5 866 9.5 C864.5 13 869 14 873 14.5 C877 15 879 15.5 878 18 C876.5 20.5 869 20 865.5 18 L865 21 C869 23.5 879 23.5 881.5 19 C883.5 15 879 13 874.5 12.5 C870.5 12 868.5 11.5 869.5 9.8 C871 8 877 8.5 879.5 10 Z" fill="#fff"/></g>
<circle cx="922.5" cy="15.5" r="6.5" fill="#3d5bd0"/><circle cx="918.5" cy="11.5" r="6" fill="#f9fbfe"/>
<circle cx="941" cy="12" r="1.7" fill="#3d5bd0"/><path d="M946.5 14 C947.5 14 948 15 948 16 C948 18 947 19.5 945.5 20" fill="none" stroke="#3d5bd0" stroke-width="1.8"/>
<circle cx="965.5" cy="15" r="7" fill="none" stroke="#3d5bd0" stroke-width="1.5"/><circle cx="963" cy="13" r="1" fill="#3d5bd0"/><circle cx="968" cy="13" r="1" fill="#3d5bd0"/><path d="M962 16.5 C964 19 967 19 969 16.5" fill="none" stroke="#3d5bd0" stroke-width="1.3"/>
<rect x="985" y="7" width="6" height="11" rx="3" fill="#3d5bd0"/><path d="M982.5 13.5 C982.5 20 993.5 20 993.5 13.5 M988 19.5 V22.5 M985 22.5 H991" fill="none" stroke="#3d5bd0" stroke-width="1.5"/>
<rect x="1002" y="9" width="16" height="11" rx="1.5" fill="#3d5bd0"/><g fill="#fff"><rect x="1004" y="11" width="2" height="1.5"/><rect x="1007" y="11" width="2" height="1.5"/><rect x="1010" y="11" width="2" height="1.5"/><rect x="1013" y="11" width="2" height="1.5"/><rect x="1004" y="14" width="2" height="1.5"/><rect x="1007" y="14" width="2" height="1.5"/><rect x="1010" y="14" width="2" height="1.5"/><rect x="1013" y="14" width="2" height="1.5"/><rect x="1006" y="17" width="8" height="1.5"/></g>
<circle cx="1032" cy="11" r="3" fill="#3d5bd0"/><path d="M1026 21 C1026 16 1029 15 1032 15 C1035 15 1038 16 1038 21 Z" fill="#3d5bd0"/><rect x="1033" y="16" width="10" height="7" rx="1" fill="#3d5bd0"/><text x="1034" y="22" font-size="6" font-weight="bold" fill="#fff" font-family="Liberation Sans, sans-serif">46</text>
<path d="M1050 9 L1053 8.5 C1053.5 10 1055.5 10 1056 8.5 L1059 9 L1061.5 13 L1059 14 V21.5 H1050 V14 L1047.5 13 Z" fill="#3d5bd0"/>
<path d="M1097 9 C1101 7 1105 10 1103.5 13.5 C1102.5 15 1100.5 15.5 1099 15 L1093.5 21 C1092.5 22 1091 21.5 1091 20 L1097 14.5 C1096 13 1096.5 11 1098 10 L1100 12 L1102 11 L1101.5 9.5 Z" fill="#3d5bd0"/>
</svg>
<div class="t" style="left:893px;top:8px;font-size:14px;font-weight:bold;color:#3d5bd0">英</div>
<div class="t" style="left:1068px;top:8px;font-size:14px;font-weight:bold;color:#3d5bd0">全</div>
<!-- CANVAS CURSOR -->
<svg style="left:0;top:0" width="1300" height="723">
<defs><radialGradient id="cg"><stop offset="0.84" stop-color="#66621f"/><stop offset="0.93" stop-color="#5e5a20" stop-opacity="0.85"/><stop offset="1" stop-color="#55521f" stop-opacity="0"/></radialGradient></defs>
<circle cx="665.5" cy="650.5" r="44" fill="url(#cg)"/>
<path d="M664.5 649.5 V673 L670 667.5 L682.5 666.5 Z" fill="#111" stroke="#d8d0b8" stroke-width="0.9"/>
<path d="M688.5 666 L692 670 H690.3 V674.8 H695 V673 L699 677 L695 681 V679.2 H690.3 V684 H692 L688.5 688 L685 684 H686.7 V679.2 H682 V681 L678 677 L682 673 V674.8 H686.7 V670 H685 Z" fill="#0a0a0a" stroke="#e0d8c0" stroke-width="1"/>
<path d="M684.5 677 H692.5 M688.5 673 V681" stroke="#d8d0b8" stroke-width="0.9"/>
</svg>
</body></html>
